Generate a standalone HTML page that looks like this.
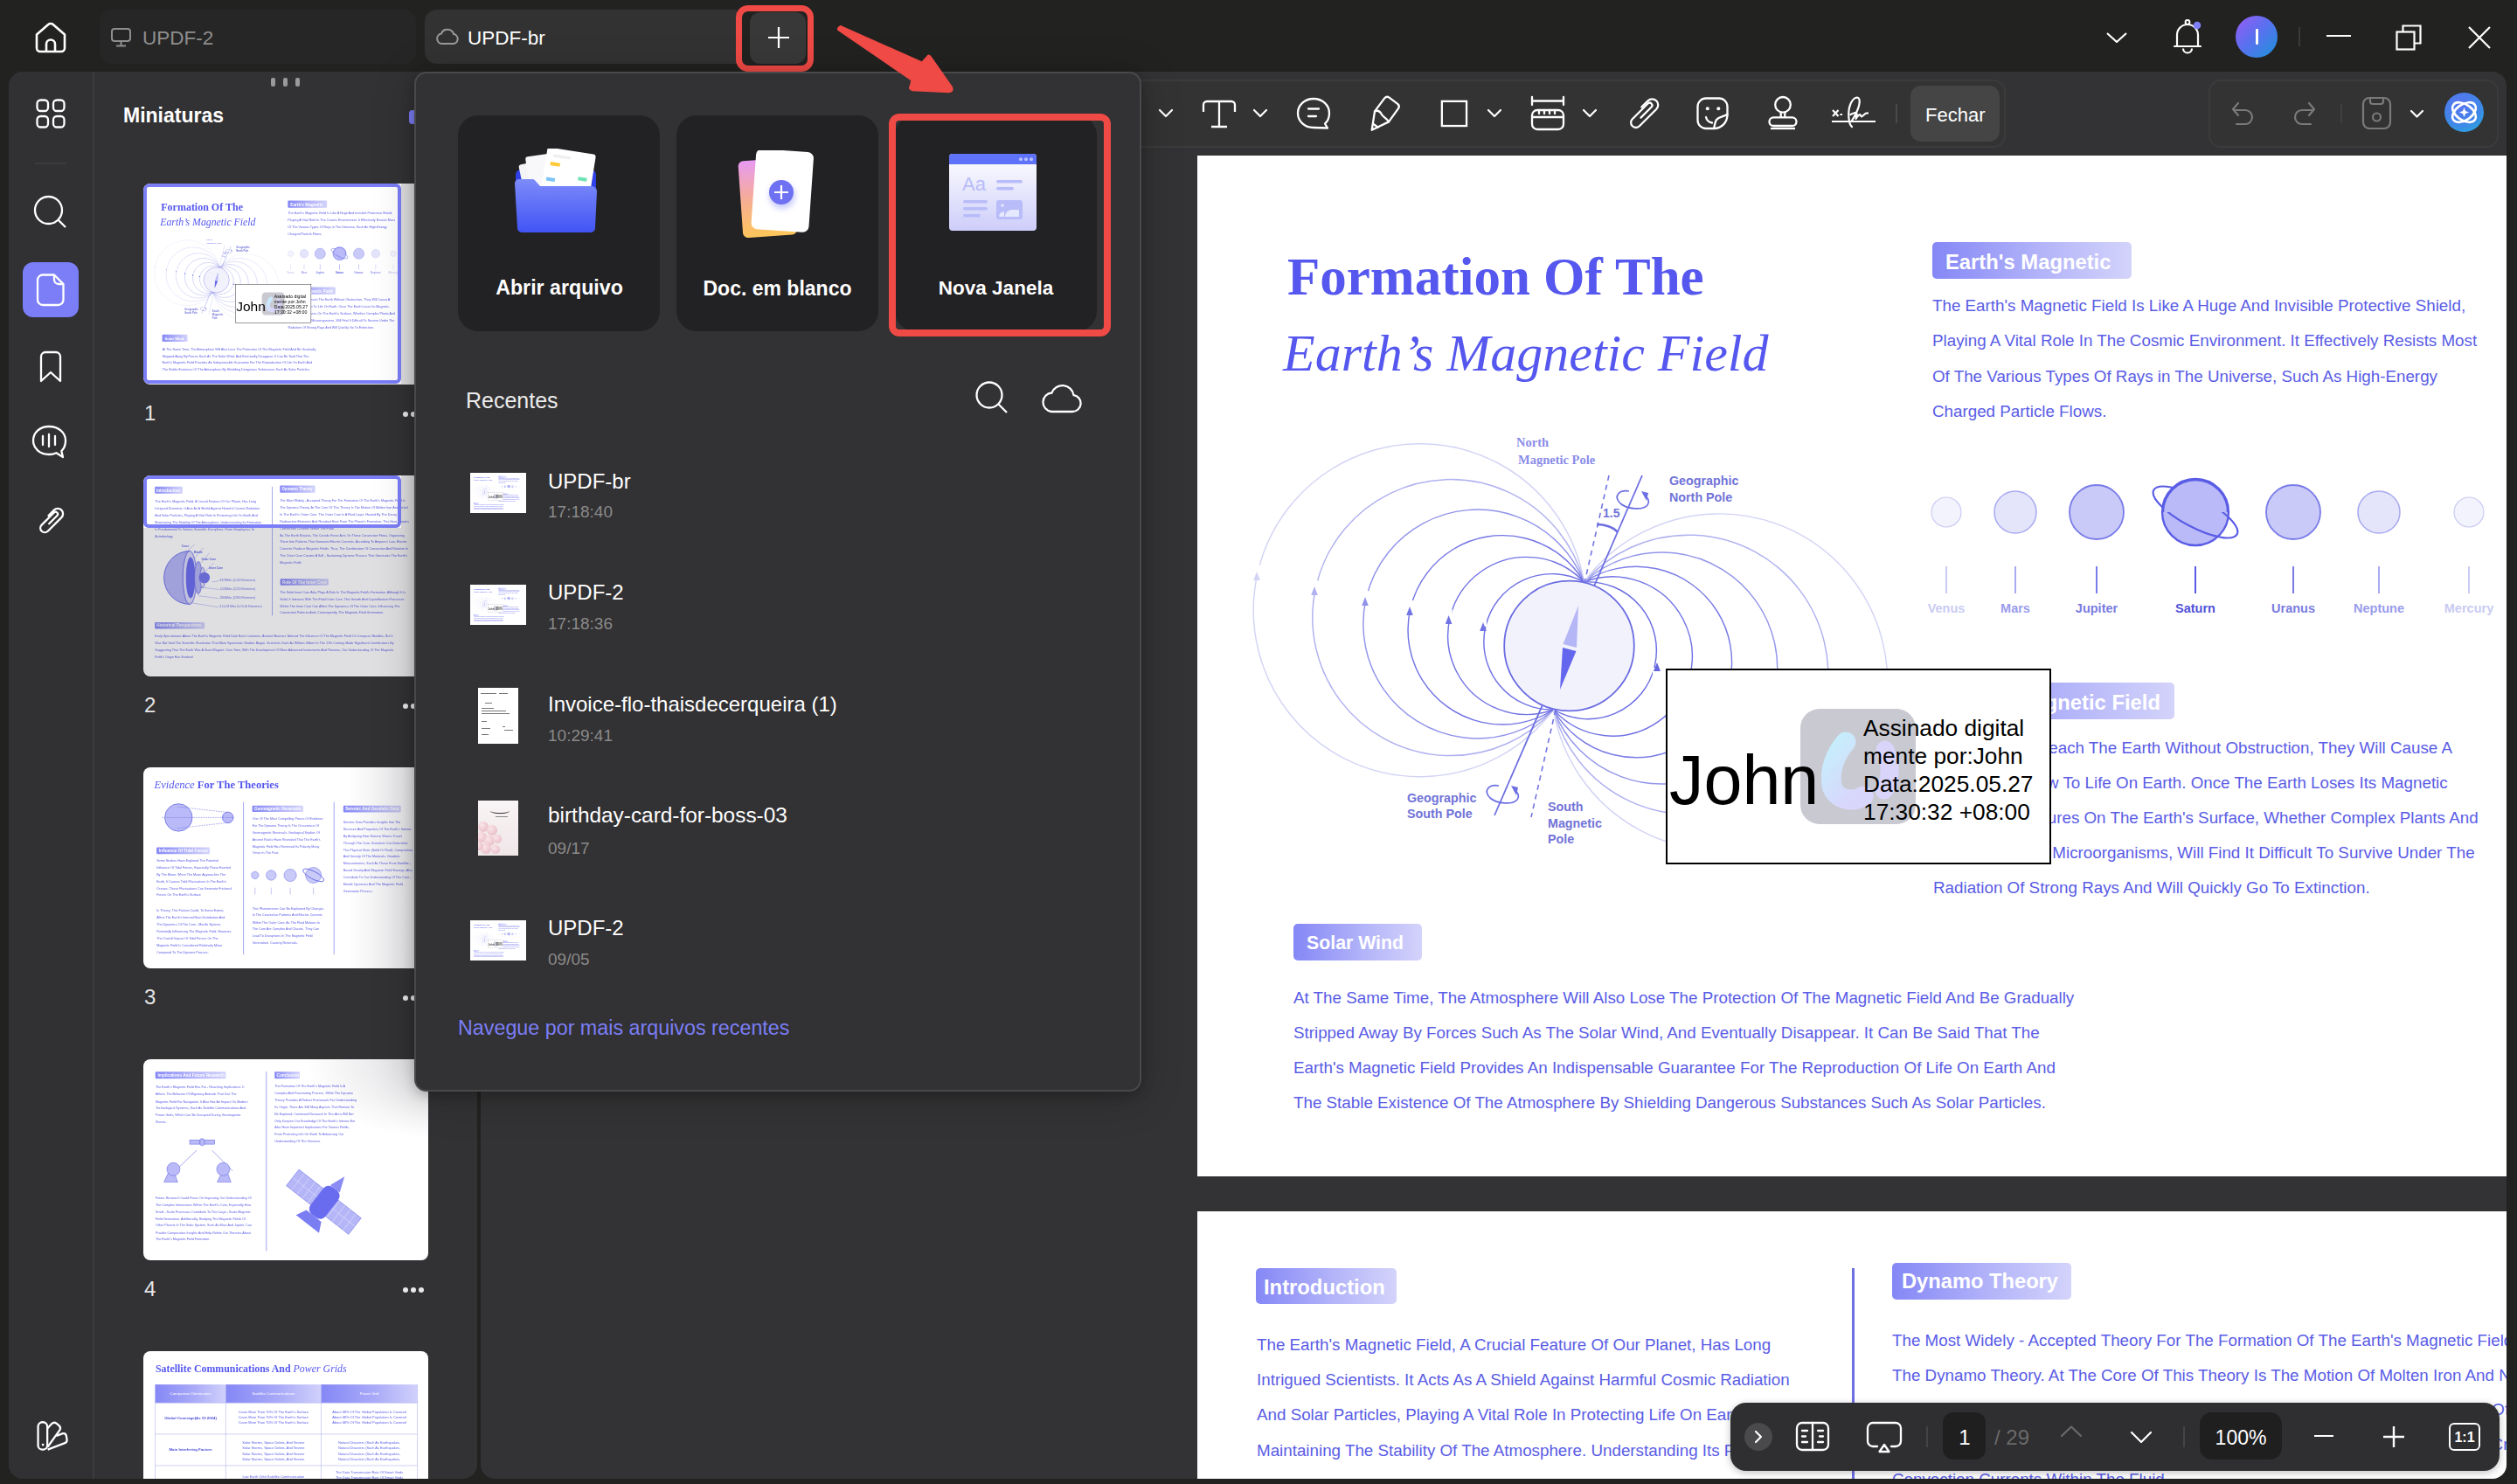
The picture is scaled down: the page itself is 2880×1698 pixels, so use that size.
<!DOCTYPE html>
<html><head><meta charset="utf-8">
<style>
*{margin:0;padding:0;box-sizing:border-box}
html,body{width:2880px;height:1698px;overflow:hidden;background:#222221;font-family:"Liberation Sans",sans-serif}
.t{position:absolute;white-space:nowrap;line-height:1}
.r{position:absolute}
.clip{position:absolute;overflow:hidden}
</style></head><body>
<svg class="r" style="left:38px;top:22px;" width="40" height="40" viewBox="0 0 40 40" fill="none"><path d="M4 17.5 L17 6.2 a4.5 4.5 0 0 1 6 0 L36 17.5 V33 a4 4 0 0 1 -4 4 H8 a4 4 0 0 1 -4 -4 Z" stroke="#fff" stroke-width="2.6" stroke-linejoin="round"/><path d="M15 37 V28.5 a5 5 0 0 1 10 0 V37" stroke="#fff" stroke-width="2.6"/></svg>
<div class="r" style="left:114px;top:11px;width:362px;height:62px;background:#262626;border-radius:14px;"></div>
<svg class="r" style="left:126px;top:31px;" width="26" height="24" viewBox="0 0 26 24" fill="none"><rect x="2" y="2" width="21" height="14" rx="3" stroke="#8e8e8e" stroke-width="2"/><path d="M12.5 16 V21 M7 21.5 H18" stroke="#8e8e8e" stroke-width="2"/></svg>
<div class="t" style="left:163px;top:32.95px;font-size:22.5px;color:#8e8e8e;">UPDF-2</div>
<div class="r" style="left:486px;top:11px;width:420px;height:62px;background:#323232;border-radius:14px;"></div>
<svg class="r" style="left:498px;top:30px;" width="28" height="24" viewBox="0 0 28 24" fill="none"><path d="M7.5 20 H20 a5.5 5.5 0 0 0 1.2 -10.9 A7.5 7.5 0 0 0 7 8.5 A5.8 5.8 0 0 0 7.5 20 Z" stroke="#9a9a9a" stroke-width="2" stroke-linejoin="round"/></svg>
<div class="t" style="left:535px;top:32.95px;font-size:22.5px;color:#ffffff;">UPDF-br</div>
<div class="r" style="left:843px;top:11px;width:88px;height:62px;background:#222221;border-radius:0px;"></div>
<div class="r" style="left:858px;top:14px;width:64px;height:59px;background:#383838;border-radius:12px;"></div>
<svg class="r" style="left:877px;top:29px;" width="28" height="28" viewBox="0 0 28 28" fill="none"><path d="M14 2 V26 M2 14 H26" stroke="#fff" stroke-width="2.2"/></svg>
<div class="r" style="left:842px;top:6px;width:89px;height:76px;border:7.5px solid #ef4a45;border-radius:14px"></div>
<svg class="r" style="left:2408px;top:34px;" width="28" height="18" viewBox="0 0 28 18" fill="none"><path d="M3 4 L14 14 L25 4" stroke="#fff" stroke-width="2.2" stroke-linejoin="round"/></svg>
<svg class="r" style="left:2484px;top:20px;" width="40" height="42" viewBox="0 0 40 42" fill="none"><path d="M7 33 V20 a12 12 0 0 1 24 0 V33 M4 33 H34" stroke="#fff" stroke-width="2.2" stroke-linecap="round"/><path d="M14 35.5 a5 5 0 0 0 10 0" stroke="#fff" stroke-width="2.2"/><circle cx="19" cy="5.5" r="2.4" stroke="#fff" stroke-width="2"/><circle cx="30" cy="9" r="4.3" fill="#7e80f7"/></svg>
<div class="r" style="left:2558px;top:18px;width:48px;height:48px;border-radius:50%;background:linear-gradient(135deg,#9b5cf6 0%,#5c6ff0 45%,#1b93d9 100%)"></div>
<div class="r" style="left:2581px;top:33px;width:2.6px;height:18px;background:#fff;border-radius:1px;"></div>
<div class="r" style="left:2630px;top:31px;width:2px;height:22px;background:#3a3a3a;border-radius:0px;"></div>
<div class="r" style="left:2662px;top:40px;width:28px;height:2.4px;background:#fff;border-radius:0px;"></div>
<svg class="r" style="left:2740px;top:27px;" width="32" height="32" viewBox="0 0 32 32" fill="none"><rect x="2.5" y="9.5" width="20" height="20" stroke="#fff" stroke-width="2.2"/><path d="M9.5 9.5 V2.5 H29.5 V22.5 H22.5" stroke="#fff" stroke-width="2.2"/></svg>
<svg class="r" style="left:2823px;top:29px;" width="28" height="28" viewBox="0 0 28 28" fill="none"><path d="M2 2 L26 26 M26 2 L2 26" stroke="#fff" stroke-width="2.2"/></svg>
<div class="r" style="left:10px;top:82px;width:536px;height:1610px;background:#323133;border-radius:16px;"></div>
<div class="r" style="left:10px;top:82px;width:97px;height:1610px;background:#313032;border-radius:16px 0 0 16px"></div>
<div class="r" style="left:106px;top:82px;width:2px;height:1610px;background:#3c3b3d;border-radius:0px;"></div>
<svg class="r" style="left:40px;top:112px;" width="36" height="36" viewBox="0 0 36 36" fill="none"><rect x="2.5" y="2.5" width="12.5" height="12.5" rx="4" stroke="#fff" stroke-width="2.3"/><rect x="21" y="2.5" width="12.5" height="12.5" rx="4" stroke="#fff" stroke-width="2.3"/><rect x="2.5" y="21" width="12.5" height="12.5" rx="4" stroke="#fff" stroke-width="2.3"/><rect x="21" y="21" width="12.5" height="12.5" rx="4" stroke="#fff" stroke-width="2.3"/></svg>
<div class="r" style="left:40px;top:186px;width:36px;height:1.5px;background:#3c3c3c;border-radius:0px;"></div>
<svg class="r" style="left:37px;top:222px;" width="42" height="42" viewBox="0 0 42 42" fill="none"><circle cx="18.5" cy="18.5" r="15.5" stroke="#fff" stroke-width="2.3"/><path d="M29.5 29.5 L38 38" stroke="#fff" stroke-width="2.3"/></svg>
<div class="r" style="left:26px;top:300px;width:64px;height:63px;background:#7b7ef7;border-radius:12px;"></div>
<svg class="r" style="left:40px;top:312px;" width="36" height="40" viewBox="0 0 36 40" fill="none"><path d="M9 2.5 H22 L32.5 13 V31 a6 6 0 0 1 -6 6 H9 a6 6 0 0 1 -6 -6 V8.5 a6 6 0 0 1 6 -6 Z" stroke="#fff" stroke-width="2.3" stroke-linejoin="round"/><path d="M22 2.5 V8 a5 5 0 0 0 5 5 H32.5" stroke="#fff" stroke-width="2.3"/></svg>
<svg class="r" style="left:42px;top:400px;" width="32" height="40" viewBox="0 0 32 40" fill="none"><path d="M5 36 V8 a5 5 0 0 1 5 -5 H22 a5 5 0 0 1 5 5 V36 L16 26 Z" stroke="#fff" stroke-width="2.3" stroke-linejoin="round"/></svg>
<svg class="r" style="left:35px;top:485px;" width="44" height="42" viewBox="0 0 44 42" fill="none"><path d="M21 3 C10.5 3 3 10 3 19 C3 28 10.5 35 21 35 C24 35 27 34.3 29.5 33.2 L37 38 L35.3 31 C38.7 28 40 24 40 19 C40 10 32 3 21 3 Z" stroke="#fff" stroke-width="2.3" stroke-linejoin="round"/><path d="M14 14 V24 M21 12 V26 M28 14 V24" stroke="#fff" stroke-width="2.3" stroke-linecap="round"/></svg>
<svg class="r" style="left:39px;top:575px;" width="40" height="40" viewBox="0 0 40 40" fill="none"><g transform="translate(20 20) rotate(45)"><path d="M-6,-1 V-10 A6,6 0 0 1 6,-10 V12 A5,5 0 0 1 -4,12 V-8 A2.5,2.5 0 0 1 1,-8 V5" stroke="#fff" stroke-width="2.3" stroke-linecap="round"/></g></svg>
<svg class="r" style="left:40px;top:1624px;" width="40" height="40" viewBox="0 0 40 40" fill="none"><rect x="3.55" y="3.25" width="10.6" height="31.4" rx="5" stroke="#fff" stroke-width="2.3"/><circle cx="9.1" cy="29.1" r="1.4" fill="#fff"/><path d="M14.15 10.5 L19.2 5 Q21.8 2.6 24.6 4.6 L27.8 7.4 Q30 9.8 28.3 12.3 L14.6 31.5" stroke="#fff" stroke-width="2.3" stroke-linejoin="round"/><path d="M24.6 18.8 L32 16.2 Q35 15.6 35.8 18.6 L36.6 23.4 Q36.9 26.2 34.2 27.2 L14.6 34.6" stroke="#fff" stroke-width="2.3" stroke-linejoin="round"/></svg>
<div class="r" style="left:310px;top:89px;width:4.5px;height:10px;background:#9a9a9a;border-radius:2px;"></div>
<div class="r" style="left:324px;top:89px;width:4.5px;height:10px;background:#9a9a9a;border-radius:2px;"></div>
<div class="r" style="left:338px;top:89px;width:4.5px;height:10px;background:#9a9a9a;border-radius:2px;"></div>
<div class="t" style="left:141px;top:120.53px;font-size:23px;color:#fff;font-weight:700;">Miniaturas</div>
<div class="r" style="left:468px;top:126px;width:10px;height:16px;background:#7b7ef7;border-radius:4px;"></div>
<div class="t" style="left:165px;top:460.68px;font-size:24px;color:#e6e6e6;">1</div>
<div class="r" style="left:461px;top:470.5px;width:6px;height:6px;background:#e8e8e8;border-radius:3px;"></div>
<div class="r" style="left:470px;top:470.5px;width:6px;height:6px;background:#e8e8e8;border-radius:3px;"></div>
<div class="r" style="left:479px;top:470.5px;width:6px;height:6px;background:#e8e8e8;border-radius:3px;"></div>
<div class="t" style="left:165px;top:794.68px;font-size:24px;color:#e6e6e6;">2</div>
<div class="r" style="left:461px;top:804.5px;width:6px;height:6px;background:#e8e8e8;border-radius:3px;"></div>
<div class="r" style="left:470px;top:804.5px;width:6px;height:6px;background:#e8e8e8;border-radius:3px;"></div>
<div class="r" style="left:479px;top:804.5px;width:6px;height:6px;background:#e8e8e8;border-radius:3px;"></div>
<div class="t" style="left:165px;top:1128.68px;font-size:24px;color:#e6e6e6;">3</div>
<div class="r" style="left:461px;top:1138.5px;width:6px;height:6px;background:#e8e8e8;border-radius:3px;"></div>
<div class="r" style="left:470px;top:1138.5px;width:6px;height:6px;background:#e8e8e8;border-radius:3px;"></div>
<div class="r" style="left:479px;top:1138.5px;width:6px;height:6px;background:#e8e8e8;border-radius:3px;"></div>
<div class="t" style="left:165px;top:1462.68px;font-size:24px;color:#e6e6e6;">4</div>
<div class="r" style="left:461px;top:1472.5px;width:6px;height:6px;background:#e8e8e8;border-radius:3px;"></div>
<div class="r" style="left:470px;top:1472.5px;width:6px;height:6px;background:#e8e8e8;border-radius:3px;"></div>
<div class="r" style="left:479px;top:1472.5px;width:6px;height:6px;background:#e8e8e8;border-radius:3px;"></div>
<div class="clip" style="left:550px;top:82px;width:2318px;height:1610px;background:#333234;border-radius:16px">
<div class="r" style="left:10px;top:9px;width:1735px;height:78px;background:#333334;border:2px solid #3b3b3c;border-radius:14px"></div>
<div class="r" style="left:1977px;top:9px;width:332px;height:78px;background:#333334;border:2px solid #3b3b3c;border-radius:14px"></div>
<div class="clip" style="left:820px;top:96px;width:1658px;height:1168px;background:#fff"><div class="t" style="left:103px;top:107.91px;font-size:61px;color:#5557ee;font-weight:700;font-family:'Liberation Serif', serif;">Formation Of The</div><div class="t" style="left:98px;top:195.75px;font-size:60px;color:#5557ee;font-family:'Liberation Serif', serif;font-style:italic;">Earth’s Magnetic Field</div><svg class="r" style="left:0;top:0" width="1000" height="900" fill="none"><path d="M442.5,488 A190.5,190.5 0 1 0 407.5,634" stroke="#d3d4f5" stroke-width="1.45"/><rect x="64" y="469" width="8" height="12" fill="#fff"/><path d="M64.2,486 L68,476 L71.8,486 Z" fill="#d3d4f5"/><path d="M442.5,488 A158.0,158.0 0 1 0 407.5,634" stroke="#b0b1f0" stroke-width="1.45"/><rect x="130" y="486" width="8" height="12" fill="#fff"/><path d="M130.2,503 L134,493 L137.8,503 Z" fill="#b0b1f0"/><path d="M442.5,488 A130.9,130.9 0 1 0 407.5,634" stroke="#9193eb" stroke-width="1.45"/><rect x="188" y="498" width="8" height="12" fill="#fff"/><path d="M188.2,515 L192,505 L195.8,515 Z" fill="#9193eb"/><path d="M442.5,488 A108.2,108.2 0 1 0 407.5,634" stroke="#7375e4" stroke-width="1.45"/><rect x="239" y="509" width="8" height="12" fill="#fff"/><path d="M239.2,526 L243,516 L246.8,526 Z" fill="#7375e4"/><path d="M442.5,488 A90.0,90.0 0 1 0 407.5,634" stroke="#7173e4" stroke-width="1.45"/><rect x="283.6" y="519" width="8" height="12" fill="#fff"/><path d="M283.8,536 L287.6,526 L291.40000000000003,536 Z" fill="#7173e4"/><path d="M442.5,488 A77.7,77.7 0 1 0 407.5,634" stroke="#7173e4" stroke-width="1.45"/><rect x="323" y="527" width="8" height="12" fill="#fff"/><path d="M323.2,544 L327,534 L330.8,544 Z" fill="#7173e4"/><path d="M442.5,488 A78.4,78.4 0 1 1 407.5,634" stroke="#6d6fe2" stroke-width="1.45"/><path d="M442.5,488 A91.1,91.1 0 1 1 407.5,634" stroke="#7173e4" stroke-width="1.45"/><path d="M442.5,488 A109.3,109.3 0 1 1 407.5,634" stroke="#7a7ce6" stroke-width="1.45"/><path d="M442.5,488 A132.5,132.5 0 1 1 407.5,634" stroke="#9395ea" stroke-width="1.45"/><path d="M442.5,488 A159.7,159.7 0 1 1 407.5,634" stroke="#b0b1f0" stroke-width="1.45"/><path d="M442.5,488 A192.4,192.4 0 1 1 407.5,634" stroke="#d3d4f5" stroke-width="1.45"/><rect x="521" y="586" width="10" height="12" fill="#fff"/><path d="M522,590 L526,580 L530,590 Z" fill="#6466e0"/><path d="M509,366 L340,755" stroke="#6d6fe2" stroke-width="1.8"/><path d="M471,366 L382,757" stroke="#7375e2" stroke-width="1.6" stroke-dasharray="6 5"/><path d="M494,384 C 482,382 476,390 484,398 C 492,405 510,406 515,400 C 518,396 516,392 512,389" stroke="#6d6fe2" stroke-width="1.7"/><path d="M508,384 L516,386 L514,395 Z" fill="#6d6fe2"/><path d="M457,422 C 466,422 476,425 481,431" stroke="#6d6fe2" stroke-width="2.6"/><path d="M345,721 C 333,719 327,727 335,735 C 343,742 361,743 366,737 C 369,733 367,729 363,726" stroke="#6d6fe2" stroke-width="1.7"/><path d="M359,721 L367,723 L365,732 Z" fill="#6d6fe2"/><circle cx="425.5" cy="561" r="74.3" fill="#f2f2fc" stroke="#6a6ce2" stroke-width="1.8"/><path d="M436,515 L418.5,559 L434,563 Z" fill="#b5b6f6"/><path d="M418,563 L433.5,567 L415,611 Z" fill="#6466ee"/></svg><div class="t" style="left:365px;top:320.86px;font-size:14.5px;color:#8a8ce8;font-weight:700;font-family:'Liberation Serif', serif;">North</div><div class="t" style="left:367px;top:340.86px;font-size:14.5px;color:#8a8ce8;font-weight:700;font-family:'Liberation Serif', serif;">Magnetic Pole</div><div class="t" style="left:540px;top:364.90px;font-size:14.3px;color:#7173d8;font-weight:700;">Geographic</div><div class="t" style="left:540px;top:383.90px;font-size:14.3px;color:#7173d8;font-weight:700;">North Pole</div><div class="t" style="left:464px;top:402.15px;font-size:14px;color:#7173d8;font-weight:700;">1.5</div><div class="t" style="left:240px;top:727.90px;font-size:14.3px;color:#7173d8;font-weight:700;">Geographic</div><div class="t" style="left:240px;top:745.90px;font-size:14.3px;color:#7173d8;font-weight:700;">South Pole</div><div class="t" style="left:401px;top:737.90px;font-size:14.3px;color:#7173d8;font-weight:700;">South</div><div class="t" style="left:401px;top:756.90px;font-size:14.3px;color:#7173d8;font-weight:700;">Magnetic</div><div class="t" style="left:401px;top:774.90px;font-size:14.3px;color:#7173d8;font-weight:700;">Pole</div><div class="r" style="left:841px;top:99px;width:228px;height:42px;border-radius:5px;background:linear-gradient(90deg,#8587f6 0%,#b3b4f9 55%,#d3d3fb 100%)"></div><div class="t" style="left:856px;top:109.85px;font-size:23.8px;color:#fff;font-weight:700;">Earth&#x27;s Magnetic</div><div class="t" style="left:841px;top:163.09px;font-size:18.8px;color:#5a5ce6;">The Earth&#x27;s Magnetic Field Is Like A Huge And Invisible Protective Shield,</div><div class="t" style="left:841px;top:203.39px;font-size:18.8px;color:#5a5ce6;">Playing A Vital Role In The Cosmic Environment. It Effectively Resists Most</div><div class="t" style="left:841px;top:243.69px;font-size:18.8px;color:#5a5ce6;">Of The Various Types Of Rays in The Universe, Such As High-Energy</div><div class="t" style="left:841px;top:283.99px;font-size:18.8px;color:#5a5ce6;">Charged Particle Flows.</div><svg class="r" style="left:0;top:0" width="1660" height="560" fill="none"><circle cx="857" cy="408" r="17" fill="#f3f3fd" stroke="#c9cbf3" stroke-width="1.1700000000000002"/><path d="M857,470 V501" stroke="#c9cbf3" stroke-width="2"/><circle cx="936" cy="408" r="24" fill="#e4e4fb" stroke="#a9abf0" stroke-width="1.56"/><path d="M936,470 V501" stroke="#a9abf0" stroke-width="2"/><circle cx="1029" cy="408" r="31" fill="#c9caf8" stroke="#7a7ce8" stroke-width="1.8199999999999998"/><path d="M1029,470 V501" stroke="#7a7ce8" stroke-width="2"/><circle cx="1142" cy="408" r="38" fill="#b9baf7" stroke="#5a5ce6" stroke-width="2.3400000000000003"/><path d="M1142,470 V501" stroke="#5a5ce6" stroke-width="2"/><circle cx="1254" cy="408" r="31" fill="#c9caf8" stroke="#7a7ce8" stroke-width="1.8199999999999998"/><path d="M1254,470 V501" stroke="#7a7ce8" stroke-width="2"/><circle cx="1352" cy="408" r="24" fill="#e4e4fb" stroke="#a9abf0" stroke-width="1.56"/><path d="M1352,470 V501" stroke="#a9abf0" stroke-width="2"/><circle cx="1455" cy="408" r="17" fill="#f3f3fd" stroke="#c9cbf3" stroke-width="1.1700000000000002"/><path d="M1455,470 V501" stroke="#c9cbf3" stroke-width="2"/><ellipse cx="1142" cy="408" rx="54" ry="17" transform="rotate(28 1142 408)" stroke="#5a5ce6" stroke-width="2.2"/><circle cx="1142" cy="408" r="37" fill="#b9baf7" fill-opacity="0.0"/><path d="M1105,408 A37,37 0 0 1 1179,408" fill="#b9baf7" stroke="#5a5ce6" stroke-width="2.3" /></svg><div class="t" style="left:857px;top:510.73px;font-size:14.5px;color:#c9cbf3;font-weight:700;transform:translateX(-50%);">Venus</div><div class="t" style="left:936px;top:510.73px;font-size:14.5px;color:#9a9cec;font-weight:700;transform:translateX(-50%);">Mars</div><div class="t" style="left:1029px;top:510.73px;font-size:14.5px;color:#7a7ce0;font-weight:700;transform:translateX(-50%);">Jupiter</div><div class="t" style="left:1142px;top:510.73px;font-size:14.5px;color:#5052d8;font-weight:700;transform:translateX(-50%);">Saturn</div><div class="t" style="left:1254px;top:510.73px;font-size:14.5px;color:#7a7ce0;font-weight:700;transform:translateX(-50%);">Uranus</div><div class="t" style="left:1352px;top:510.73px;font-size:14.5px;color:#9a9cec;font-weight:700;transform:translateX(-50%);">Neptune</div><div class="t" style="left:1455px;top:510.73px;font-size:14.5px;color:#c9cbf3;font-weight:700;transform:translateX(-50%);">Mercury</div><div class="r" style="left:841px;top:603px;width:277px;height:42px;border-radius:5px;background:linear-gradient(90deg,#8587f6 0%,#b3b4f9 55%,#d3d3fb 100%)"></div><div class="t" style="left:1102px;top:613.85px;font-size:23.8px;color:#fff;font-weight:700;transform:translateX(-100%);">The Magnetic Field</div><div class="t" style="left:1436px;top:669.09px;font-size:18.8px;color:#5a5ce6;transform:translateX(-100%);">If These Rays Reach The Earth Without Obstruction, They Will Cause A</div><div class="t" style="left:1430.7px;top:709.09px;font-size:18.8px;color:#5a5ce6;transform:translateX(-100%);">Devastating Blow To Life On Earth. Once The Earth Loses Its Magnetic</div><div class="t" style="left:1465.6px;top:749.09px;font-size:18.8px;color:#5a5ce6;transform:translateX(-100%);">Field, All Creatures On The Earth&#x27;s Surface, Whether Complex Plants And</div><div class="t" style="left:1461.6px;top:789.09px;font-size:18.8px;color:#5a5ce6;transform:translateX(-100%);">Animals And Tiny Microorganisms, Will Find It Difficult To Survive Under The</div><div class="t" style="left:842px;top:829.09px;font-size:18.8px;color:#5a5ce6;">Radiation Of Strong Rays And Will Quickly Go To Extinction.</div><div class="r" style="left:536px;top:587px;width:441px;height:224px;background:#fff;border:2.8px solid #000"></div><div class="r" style="left:690px;top:633px;width:132px;height:132px;background:#c9c9d1;border-radius:22px;"></div><svg class="r" style="left:690px;top:633px" width="132" height="132" fill="none"><defs><linearGradient id="sg1" x1="0" y1="0" x2="0.6" y2="1"><stop offset="0" stop-color="#c6eefc"/><stop offset="1" stop-color="#d8d6fb"/></linearGradient></defs><path d="M52,38 C40,52 33,70 36,88 C40,104 60,108 72,100" stroke="url(#sg1)" stroke-width="23" stroke-linecap="round"/><path d="M97,47 C104,62 104,80 96,93" stroke="#d9d5fa" stroke-width="21" stroke-linecap="round"/></svg><div class="t" style="left:540px;top:675.13px;font-size:79px;color:#000;">John</div><div class="t" style="left:762px;top:641.74px;font-size:26.3px;color:#000;">Assinado digital</div><div class="t" style="left:762px;top:673.74px;font-size:26.3px;color:#000;">mente por:John</div><div class="t" style="left:762px;top:705.74px;font-size:26.3px;color:#000;">Data:2025.05.27</div><div class="t" style="left:762px;top:737.74px;font-size:26.3px;color:#000;">17:30:32 +08:00</div><div class="r" style="left:110px;top:879px;width:147px;height:42px;border-radius:5px;background:linear-gradient(90deg,#8587f6 0%,#b3b4f9 55%,#d3d3fb 100%)"></div><div class="t" style="left:125px;top:890.97px;font-size:21.3px;color:#fff;font-weight:700;">Solar Wind</div><div class="t" style="left:110px;top:955.09px;font-size:18.8px;color:#5a5ce6;">At The Same Time, The Atmosphere Will Also Lose The Protection Of The Magnetic Field And Be Gradually</div><div class="t" style="left:110px;top:995.09px;font-size:18.8px;color:#5a5ce6;">Stripped Away By Forces Such As The Solar Wind, And Eventually Disappear. It Can Be Said That The</div><div class="t" style="left:110px;top:1035.09px;font-size:18.8px;color:#5a5ce6;">Earth&#x27;s Magnetic Field Provides An Indispensable Guarantee For The Reproduction Of Life On Earth And</div><div class="t" style="left:110px;top:1075.09px;font-size:18.8px;color:#5a5ce6;">The Stable Existence Of The Atmosphere By Shielding Dangerous Substances Such As Solar Particles.</div></div>
<div class="clip" style="left:820px;top:1304px;width:1658px;height:1168px;background:#fff"><div class="r" style="left:67px;top:65px;width:161px;height:41px;border-radius:5px;background:linear-gradient(90deg,#8587f6 0%,#b3b4f9 55%,#d3d3fb 100%)"></div><div class="t" style="left:76px;top:74.85px;font-size:23.8px;color:#fff;font-weight:700;">Introduction</div><div class="r" style="left:749px;top:65px;width:2.5px;height:750px;background:#6d6fe2;border-radius:0px;"></div><div class="r" style="left:795px;top:59px;width:205px;height:42px;border-radius:5px;background:linear-gradient(90deg,#8587f6 0%,#b3b4f9 55%,#d3d3fb 100%)"></div><div class="t" style="left:806px;top:68.94px;font-size:23.7px;color:#fff;font-weight:700;">Dynamo Theory</div><div class="t" style="left:68px;top:144.09px;font-size:18.8px;color:#5a5ce6;">The Earth&#x27;s Magnetic Field, A Crucial Feature Of Our Planet, Has Long</div><div class="t" style="left:68px;top:184.29px;font-size:18.8px;color:#5a5ce6;">Intrigued Scientists. It Acts As A Shield Against Harmful Cosmic Radiation</div><div class="t" style="left:68px;top:224.49px;font-size:18.8px;color:#5a5ce6;">And Solar Particles, Playing A Vital Role In Protecting Life On Earth And</div><div class="t" style="left:68px;top:264.69px;font-size:18.8px;color:#5a5ce6;">Maintaining The Stability Of The Atmosphere. Understanding Its Formation</div><div class="t" style="left:68px;top:304.89px;font-size:18.8px;color:#5a5ce6;">Is Fundamental To Various Scientific Disciplines, From Geophysics To</div><div class="t" style="left:68px;top:345.09px;font-size:18.8px;color:#5a5ce6;">Astrobiology.</div><div class="t" style="left:795px;top:139.09px;font-size:18.8px;color:#5a5ce6;">The Most Widely - Accepted Theory For The Formation Of The Earth&#x27;s Magnetic Field Is</div><div class="t" style="left:795px;top:178.79px;font-size:18.8px;color:#5a5ce6;">The Dynamo Theory. At The Core Of This Theory Is The Motion Of Molten Iron And Nickel</div><div class="t" style="left:795px;top:218.49px;font-size:18.8px;color:#5a5ce6;">In The Earth&#x27;s Outer Core. The Outer Core Is A Fluid Layer, Heated By The Decay Of</div><div class="t" style="left:795px;top:258.19px;font-size:18.8px;color:#5a5ce6;">Radioactive Elements And Residual Heat From The Planet&#x27;s Formation. This Heat Creates</div><div class="t" style="left:795px;top:297.89px;font-size:18.8px;color:#5a5ce6;">Convection Currents Within The Fluid.</div><div class="t" style="left:795px;top:339.09px;font-size:18.8px;color:#5a5ce6;">As The Earth Rotates, The Coriolis Force Acts On These Convection Flows, Organizing</div><div class="t" style="left:795px;top:378.79px;font-size:18.8px;color:#5a5ce6;">Them Into Patterns That Generate Electric Currents. According To Ampere&#x27;s Law, Electric</div><div class="t" style="left:795px;top:418.49px;font-size:18.8px;color:#5a5ce6;">Currents Produce Magnetic Fields. Thus, The Combination Of Convection And Rotation In</div><div class="t" style="left:795px;top:458.19px;font-size:18.8px;color:#5a5ce6;">The Outer Core Creates A Self - Sustaining Dynamo Process That Generates The Earth&#x27;s</div><div class="t" style="left:795px;top:497.89px;font-size:18.8px;color:#5a5ce6;">Magnetic Field.</div><div class="r" style="left:797px;top:601px;width:281px;height:39px;border-radius:5px;background:linear-gradient(90deg,#8587f6 0%,#b3b4f9 55%,#d3d3fb 100%)"></div><div class="t" style="left:808px;top:609.94px;font-size:23.7px;color:#fff;font-weight:700;">Role Of The Inner Core</div><div class="t" style="left:795px;top:671.09px;font-size:18.8px;color:#5a5ce6;">The Solid Inner Core Also Plays A Role In The Magnetic Field&#x27;s Formation. Although It Is</div><div class="t" style="left:795px;top:711.09px;font-size:18.8px;color:#5a5ce6;">Solid, It Interacts With The Fluid Outer Core. The Growth And Crystallization Processes</div><div class="t" style="left:795px;top:751.09px;font-size:18.8px;color:#5a5ce6;">Within The Inner Core Can Affect The Dynamics Of The Outer Core, Influencing The</div><div class="t" style="left:795px;top:791.09px;font-size:18.8px;color:#5a5ce6;">Convection Patterns And, Consequently, The Magnetic Field Generation.</div><div class="r" style="left:67px;top:855px;width:290px;height:38px;border-radius:5px;background:linear-gradient(90deg,#8587f6 0%,#b3b4f9 55%,#d3d3fb 100%)"></div><div class="t" style="left:78px;top:862.94px;font-size:23.7px;color:#fff;font-weight:700;">Historical Perspectives</div><div class="t" style="left:68px;top:925.09px;font-size:18.8px;color:#5a5ce6;">Early Speculations About The Earth&#x27;s Magnetic Field Date Back Centuries. Ancient Mariners Noticed The Influence Of The Magnetic Field On Compass Needles, But It</div><div class="t" style="left:68px;top:965.39px;font-size:18.8px;color:#5a5ce6;">Was Not Until The Scientific Revolution That More Systematic Studies Began. Scientists Such As William Gilbert In The 17th Century Made Significant Contributions By</div><div class="t" style="left:68px;top:1005.69px;font-size:18.8px;color:#5a5ce6;">Suggesting That The Earth Was A Giant Magnet. Over Time, With The Development Of More Advanced Instruments And Theories, Our Understanding Of The Magnetic</div><div class="t" style="left:68px;top:1045.99px;font-size:18.8px;color:#5a5ce6;">Field&#x27;s Origin Has Evolved.</div><svg class="r" style="left:0;top:0" width="800" height="900" fill="none"><path d="M270,440 A150,155 0 0 0 270,750 Z" fill="#b5b6f7" stroke="#5a5ce6" stroke-width="4"/><ellipse cx="270" cy="595" rx="40" ry="155" fill="#dcdcfa" stroke="#5a5ce6" stroke-width="4"/><ellipse cx="275" cy="595" rx="25" ry="118" fill="#6a6cf0" stroke="#5a5ce6" stroke-width="3"/><ellipse cx="320" cy="595" rx="22" ry="95" fill="#b5b6f7" stroke="#5a5ce6" stroke-width="3"/><ellipse cx="345" cy="595" rx="15" ry="60" fill="#dcdcfa" stroke="#5a5ce6" stroke-width="3"/><circle cx="355" cy="595" r="32" fill="#7577ee"/><path d="M240,455 L300,400 M300,480 L350,420 M335,510 L385,450 M360,560 L410,510 M400,620 L440,614 M330,650 L440,664 M320,700 L440,716 M270,740 L440,767" stroke="#7a7ce8" stroke-width="2"/></svg><div class="t" style="left:222px;top:406.46px;font-size:16px;color:#5a5ce6;font-weight:700;">Crust</div><div class="t" style="left:294px;top:438.46px;font-size:16px;color:#5a5ce6;font-weight:700;">Mantle</div><div class="t" style="left:338px;top:482.46px;font-size:16px;color:#5a5ce6;font-weight:700;">Outer Core</div><div class="t" style="left:383px;top:531.46px;font-size:16px;color:#5a5ce6;font-weight:700;">Inner Core</div><div class="t" style="left:445px;top:604.46px;font-size:16px;color:#6a6ce2;">6370Miles (5,150 Kilometers)</div><div class="t" style="left:445px;top:654.46px;font-size:16px;color:#6a6ce2;">1220Miles (2,220 Kilometers)</div><div class="t" style="left:445px;top:706.46px;font-size:16px;color:#6a6ce2;">1800Miles (2,900 Kilometers)</div><div class="t" style="left:445px;top:757.46px;font-size:16px;color:#6a6ce2;">3.10-23 Miles (5-70-40 Kilometers)</div></div>
</div>
<svg class="r" style="left:1325px;top:124px;" width="18" height="11.0" viewBox="0 0 18 11.0" fill="none"><path d="M2 2 L9.0 9.0 L16 2" stroke="#fff" stroke-width="2.2" stroke-linejoin="round" stroke-linecap="round"/></svg>
<svg class="r" style="left:1374px;top:112px;" width="42" height="36" viewBox="0 0 42 36" fill="none"><path d="M3 16 V8 a4 4 0 0 1 4 -4 H35 a4 4 0 0 1 4 4 V16 M21 4 V33 M12 33 H30" stroke="#fff" stroke-width="2.3"/></svg>
<svg class="r" style="left:1433px;top:124px;" width="18" height="11.0" viewBox="0 0 18 11.0" fill="none"><path d="M2 2 L9.0 9.0 L16 2" stroke="#fff" stroke-width="2.2" stroke-linejoin="round" stroke-linecap="round"/></svg>
<svg class="r" style="left:1482px;top:110px;" width="42" height="42" viewBox="0 0 42 42" fill="none"><path d="M21 3 C10.5 3 3 10.5 3 19.5 C3 28.5 10.5 36 21 36 L37 36.5 L34 31.5 C37.5 28.5 39 24.5 39 19.5 C39 10.5 31.5 3 21 3 Z" stroke="#fff" stroke-width="2.3" stroke-linecap="round" stroke-linejoin="round"/><path d="M15 14.5 H27 M15 23 H24" stroke="#fff" stroke-width="2.3" stroke-linecap="round" stroke-linejoin="round"/></svg>
<svg class="r" style="left:1566px;top:108px;" width="40" height="44" viewBox="0 0 40 44" fill="none"><path d="M3.7 40.7 L7 19.4 L18.2 4.4 Q20.5 1.6 23.6 3.6 L33.2 10.8 Q36 13.2 34 16.2 L23 31.4 Z" stroke="#fff" stroke-width="2.3" stroke-linecap="round" stroke-linejoin="round"/><path d="M7 19.4 C11 17.5 13.5 20 15 23 C17 26.5 20.5 27 23 31.4" stroke="#fff" stroke-width="2.3" stroke-linecap="round" stroke-linejoin="round"/><path d="M5.2 33.8 L10.8 37.6" stroke="#fff" stroke-width="2.3" stroke-linecap="round" stroke-linejoin="round"/></svg>
<svg class="r" style="left:1646px;top:112px;" width="36" height="36" viewBox="0 0 36 36" fill="none"><rect x="3.85" y="3.85" width="28.2" height="28.2" stroke="#fff" stroke-width="2.3"/></svg>
<svg class="r" style="left:1701px;top:124px;" width="18" height="11.0" viewBox="0 0 18 11.0" fill="none"><path d="M2 2 L9.0 9.0 L16 2" stroke="#fff" stroke-width="2.2" stroke-linejoin="round" stroke-linecap="round"/></svg>
<svg class="r" style="left:1750px;top:108px;" width="42" height="44" viewBox="0 0 42 44" fill="none"><path d="M3 3 V12 M39 3 V12 M3 7.5 H39" stroke="#fff" stroke-width="2.3" stroke-linecap="round" stroke-linejoin="round"/><rect x="3" y="18" width="36" height="22" rx="6" stroke="#fff" stroke-width="2.3" stroke-linecap="round" stroke-linejoin="round"/><path d="M3 26 H39 M11 18 V22 M17 18 V22 M23 18 V22 M29 18 V22" stroke="#fff" stroke-width="2.3" stroke-linecap="round" stroke-linejoin="round"/></svg>
<svg class="r" style="left:1810px;top:124px;" width="18" height="11.0" viewBox="0 0 18 11.0" fill="none"><path d="M2 2 L9.0 9.0 L16 2" stroke="#fff" stroke-width="2.2" stroke-linejoin="round" stroke-linecap="round"/></svg>
<svg class="r" style="left:1861px;top:109px;" width="40" height="40" viewBox="0 0 40 40" fill="none"><g transform="translate(20.5 20) rotate(45) scale(1.14)"><path d="M-6,-2 V-11 A6,6 0 0 1 6,-11 V13 A5,5 0 0 1 -4,13 V-9 A2.5,2.5 0 0 1 1,-9 V6" stroke="#fff" stroke-width="2.0" stroke-linecap="round"/></g></svg>
<svg class="r" style="left:1940px;top:110px;" width="40" height="40" viewBox="0 0 40 40" fill="none"><path d="M36.5 21 V12 a9.5 9.5 0 0 0 -9.5 -9.5 H12 a9.5 9.5 0 0 0 -9.5 9.5 V27.5 a9.5 9.5 0 0 0 9.5 9.5 H21 C30 37 36.5 30 36.5 21 Z" stroke="#fff" stroke-width="2.3" stroke-linecap="round" stroke-linejoin="round"/><path d="M36.5 21 C31 24 27 23 24 27 C22 30 22 34 21 37" stroke="#fff" stroke-width="2.3" stroke-linecap="round" stroke-linejoin="round"/><path d="M12 24 C13 28 15.5 30 19 30.5" stroke="#fff" stroke-width="2.3" stroke-linecap="round" stroke-linejoin="round"/><circle cx="13.8" cy="14.3" r="2" fill="#fff"/><circle cx="26.3" cy="14.3" r="2" fill="#fff"/></svg>
<svg class="r" style="left:2020px;top:108px;" width="40" height="42" viewBox="0 0 40 42" fill="none"><circle cx="20" cy="11.8" r="8.8" stroke="#fff" stroke-width="2.3"/><path d="M17.7 20.6 V26.4 M22.3 20.6 V26.4" stroke="#fff" stroke-width="2.3"/><rect x="4.5" y="26.4" width="31" height="9.6" rx="4.8" stroke="#fff" stroke-width="2.3"/><path d="M6 39 H34" stroke="#fff" stroke-width="2.3"/></svg>
<svg class="r" style="left:2093px;top:106px;" width="56" height="46" viewBox="0 0 56 46" fill="none"><path d="M4 20 L10.5 27 M10.5 20 L4 27" stroke="#fff" stroke-width="2.2"/><path d="M3 33 H53 M12.5 25 H15" stroke="#fff" stroke-width="2.2"/><path d="M26 39 C22 36 21 22 24 14 C27 6 33 3 34.5 8 C36 14 30 26 26 32 M24.5 25 C29 23 31 22 31.5 24 C32 26 31 28 30.5 30 C33 26 35 24 36 26 C36.5 28 37 28 39 26 C41 24 43 23 44 23.5" stroke="#fff" stroke-width="2.2" stroke-linecap="round" stroke-linejoin="round"/></svg>
<div class="r" style="left:2169px;top:119px;width:2px;height:22px;background:#4a4a4a;border-radius:0px;"></div>
<div class="r" style="left:2186px;top:98px;width:102px;height:64px;background:#454546;border-radius:12px;"></div>
<div class="t" style="left:2203px;top:121.38px;font-size:22px;color:#fff;">Fechar</div>
<svg class="r" style="left:2552px;top:114px;" width="28" height="30" viewBox="0 0 28 30" fill="none"><path d="M4 12 H17 a8 8 0 0 1 0 16 H7 M9 4 L3 11 L9 18" stroke="#7a7a7a" stroke-width="2.2" stroke-linecap="round" stroke-linejoin="round"/></svg>
<svg class="r" style="left:2623px;top:114px;" width="28" height="30" viewBox="0 0 28 30" fill="none"><path d="M24 12 H11 a8 8 0 0 0 0 16 H21 M19 4 L25 11 L19 18" stroke="#7a7a7a" stroke-width="2.2" stroke-linecap="round" stroke-linejoin="round"/></svg>
<div class="r" style="left:2678px;top:119px;width:2px;height:22px;background:#3f3f3f;border-radius:0px;"></div>
<svg class="r" style="left:2702px;top:110px;" width="36" height="40" viewBox="0 0 36 40" fill="none"><rect x="2" y="2" width="31" height="35" rx="7" stroke="#7a7a7a" stroke-width="2.2" stroke-linecap="round" stroke-linejoin="round"/><path d="M10 2 V6 a3 3 0 0 0 3 3 H22 a3 3 0 0 0 3 -3 V2" stroke="#7a7a7a" stroke-width="2.2" stroke-linecap="round" stroke-linejoin="round"/><circle cx="17.5" cy="24" r="4.5" stroke="#7a7a7a" stroke-width="2.2" stroke-linecap="round" stroke-linejoin="round"/></svg>
<svg class="r" style="left:2757px;top:125px;" width="17" height="10.5" viewBox="0 0 17 10.5" fill="none"><path d="M2 2 L8.5 8.5 L15 2" stroke="#fff" stroke-width="2.2" stroke-linejoin="round" stroke-linecap="round"/></svg>
<div class="r" style="left:2797px;top:106px;width:45px;height:45px;border-radius:50%;background:radial-gradient(circle at 40% 30%,#5a74f2 0%,#3f86e8 55%,#22b6d9 100%)"></div>
<svg class="r" style="left:2797px;top:106px;" width="45" height="45" viewBox="0 0 45 45" fill="none"><ellipse cx="22.5" cy="22.5" rx="15" ry="9" transform="rotate(-35 22.5 22.5)" stroke="#fff" stroke-width="2.6"/><ellipse cx="22.5" cy="22.5" rx="15" ry="9" transform="rotate(35 22.5 22.5)" stroke="#fff" stroke-width="2.6"/><path d="M22.5 17 L24 21 L28 22.5 L24 24 L22.5 28 L21 24 L17 22.5 L21 21 Z" fill="#fff"/></svg>
<div class="r" style="left:1980px;top:1605px;width:880px;height:78px;background:#2f2e30;border-radius:18px;box-shadow:0 2px 8px rgba(0,0,0,0.25)"></div>
<div class="r" style="left:1996px;top:1628px;width:32px;height:32px;border-radius:50%;background:#4a494b"></div>
<svg class="r" style="left:2004px;top:1635px;" width="16" height="18" viewBox="0 0 16 18" fill="none"><path d="M5 3 L11 9 L5 15" stroke="#fff" stroke-width="2.2" stroke-linecap="round" stroke-linejoin="round"/></svg>
<svg class="r" style="left:2054px;top:1626px;" width="42" height="36" viewBox="0 0 42 36" fill="none"><rect x="2" y="2" width="36" height="31" rx="6" stroke="#fff" stroke-width="2.3" stroke-linecap="round" stroke-linejoin="round"/><path d="M20 2 V33 M8 11 H14 M8 17.5 H12 M8 24 H14 M26 11 H32 M28 17.5 H32 M26 24 H32" stroke="#fff" stroke-width="2.3" stroke-linecap="round" stroke-linejoin="round"/></svg>
<svg class="r" style="left:2134px;top:1626px;" width="44" height="38" viewBox="0 0 44 38" fill="none"><path d="M14 29 H9 a6 6 0 0 1 -6 -6 V8 a6 6 0 0 1 6 -6 H35 a6 6 0 0 1 6 6 V23 a6 6 0 0 1 -6 6 H30" stroke="#fff" stroke-width="2.3" stroke-linecap="round" stroke-linejoin="round"/><path d="M22 27 L27.5 35 H16.5 Z" stroke="#fff" stroke-width="2.3" stroke-linecap="round" stroke-linejoin="round"/></svg>
<div class="r" style="left:2204px;top:1632px;width:2px;height:24px;background:#444;border-radius:0px;"></div>
<div class="r" style="left:2223px;top:1616px;width:49px;height:54px;background:#1f1f20;border-radius:12px;"></div>
<div class="t" style="left:2248px;top:1632.68px;font-size:24px;color:#fff;transform:translateX(-50%);">1</div>
<div class="t" style="left:2282px;top:1632.68px;font-size:24px;color:#6a6a6a;">/ 29</div>
<svg class="r" style="left:2357px;top:1630px;" width="26" height="16" viewBox="0 0 26 16" fill="none"><path d="M2 13 L13 2.5 L24 13" stroke="#6a6a6a" stroke-width="2.2" stroke-linecap="round" stroke-linejoin="round"/></svg>
<svg class="r" style="left:2437px;top:1637px;" width="26" height="15.0" viewBox="0 0 26 15.0" fill="none"><path d="M2 2 L13.0 13.0 L24 2" stroke="#fff" stroke-width="2.2" stroke-linejoin="round" stroke-linecap="round"/></svg>
<div class="r" style="left:2498px;top:1632px;width:2px;height:24px;background:#444;border-radius:0px;"></div>
<div class="r" style="left:2517px;top:1616px;width:94px;height:54px;background:#1f1f20;border-radius:14px;"></div>
<div class="t" style="left:2564px;top:1633.53px;font-size:23px;color:#fff;transform:translateX(-50%);">100%</div>
<div class="r" style="left:2648px;top:1642px;width:22px;height:2.4px;background:#fff;border-radius:0px;"></div>
<svg class="r" style="left:2725px;top:1630px;" width="28" height="28" viewBox="0 0 28 28" fill="none"><path d="M14 2 V26 M2 14 H26" stroke="#fff" stroke-width="2.4"/></svg>
<div class="r" style="left:2802px;top:1628px;width:36px;height:32px;border:2.3px solid #fff;border-radius:6px"></div>
<div class="t" style="left:2820px;top:1637.46px;font-size:16px;color:#fff;font-weight:700;transform:translateX(-50%);">1:1</div>
<div class="clip" style="left:164px;top:210px;width:326px;height:230px;background:#fff;border-radius:8px"><div class="r" style="left:0;top:0;width:1658px;height:1168px;transform:scale(0.1966);transform-origin:0 0"><div class="t" style="left:103px;top:107.91px;font-size:61px;color:#5557ee;font-weight:700;font-family:'Liberation Serif', serif;">Formation Of The</div><div class="t" style="left:98px;top:195.75px;font-size:60px;color:#5557ee;font-family:'Liberation Serif', serif;font-style:italic;">Earth’s Magnetic Field</div><svg class="r" style="left:0;top:0" width="1000" height="900" fill="none"><path d="M442.5,488 A190.5,190.5 0 1 0 407.5,634" stroke="#d3d4f5" stroke-width="1.45"/><rect x="64" y="469" width="8" height="12" fill="#fff"/><path d="M64.2,486 L68,476 L71.8,486 Z" fill="#d3d4f5"/><path d="M442.5,488 A158.0,158.0 0 1 0 407.5,634" stroke="#b0b1f0" stroke-width="1.45"/><rect x="130" y="486" width="8" height="12" fill="#fff"/><path d="M130.2,503 L134,493 L137.8,503 Z" fill="#b0b1f0"/><path d="M442.5,488 A130.9,130.9 0 1 0 407.5,634" stroke="#9193eb" stroke-width="1.45"/><rect x="188" y="498" width="8" height="12" fill="#fff"/><path d="M188.2,515 L192,505 L195.8,515 Z" fill="#9193eb"/><path d="M442.5,488 A108.2,108.2 0 1 0 407.5,634" stroke="#7375e4" stroke-width="1.45"/><rect x="239" y="509" width="8" height="12" fill="#fff"/><path d="M239.2,526 L243,516 L246.8,526 Z" fill="#7375e4"/><path d="M442.5,488 A90.0,90.0 0 1 0 407.5,634" stroke="#7173e4" stroke-width="1.45"/><rect x="283.6" y="519" width="8" height="12" fill="#fff"/><path d="M283.8,536 L287.6,526 L291.40000000000003,536 Z" fill="#7173e4"/><path d="M442.5,488 A77.7,77.7 0 1 0 407.5,634" stroke="#7173e4" stroke-width="1.45"/><rect x="323" y="527" width="8" height="12" fill="#fff"/><path d="M323.2,544 L327,534 L330.8,544 Z" fill="#7173e4"/><path d="M442.5,488 A78.4,78.4 0 1 1 407.5,634" stroke="#6d6fe2" stroke-width="1.45"/><path d="M442.5,488 A91.1,91.1 0 1 1 407.5,634" stroke="#7173e4" stroke-width="1.45"/><path d="M442.5,488 A109.3,109.3 0 1 1 407.5,634" stroke="#7a7ce6" stroke-width="1.45"/><path d="M442.5,488 A132.5,132.5 0 1 1 407.5,634" stroke="#9395ea" stroke-width="1.45"/><path d="M442.5,488 A159.7,159.7 0 1 1 407.5,634" stroke="#b0b1f0" stroke-width="1.45"/><path d="M442.5,488 A192.4,192.4 0 1 1 407.5,634" stroke="#d3d4f5" stroke-width="1.45"/><rect x="521" y="586" width="10" height="12" fill="#fff"/><path d="M522,590 L526,580 L530,590 Z" fill="#6466e0"/><path d="M509,366 L340,755" stroke="#6d6fe2" stroke-width="1.8"/><path d="M471,366 L382,757" stroke="#7375e2" stroke-width="1.6" stroke-dasharray="6 5"/><path d="M494,384 C 482,382 476,390 484,398 C 492,405 510,406 515,400 C 518,396 516,392 512,389" stroke="#6d6fe2" stroke-width="1.7"/><path d="M508,384 L516,386 L514,395 Z" fill="#6d6fe2"/><path d="M457,422 C 466,422 476,425 481,431" stroke="#6d6fe2" stroke-width="2.6"/><path d="M345,721 C 333,719 327,727 335,735 C 343,742 361,743 366,737 C 369,733 367,729 363,726" stroke="#6d6fe2" stroke-width="1.7"/><path d="M359,721 L367,723 L365,732 Z" fill="#6d6fe2"/><circle cx="425.5" cy="561" r="74.3" fill="#f2f2fc" stroke="#6a6ce2" stroke-width="1.8"/><path d="M436,515 L418.5,559 L434,563 Z" fill="#b5b6f6"/><path d="M418,563 L433.5,567 L415,611 Z" fill="#6466ee"/></svg><div class="t" style="left:365px;top:320.86px;font-size:14.5px;color:#8a8ce8;font-weight:700;font-family:'Liberation Serif', serif;">North</div><div class="t" style="left:367px;top:340.86px;font-size:14.5px;color:#8a8ce8;font-weight:700;font-family:'Liberation Serif', serif;">Magnetic Pole</div><div class="t" style="left:540px;top:364.90px;font-size:14.3px;color:#7173d8;font-weight:700;">Geographic</div><div class="t" style="left:540px;top:383.90px;font-size:14.3px;color:#7173d8;font-weight:700;">North Pole</div><div class="t" style="left:464px;top:402.15px;font-size:14px;color:#7173d8;font-weight:700;">1.5</div><div class="t" style="left:240px;top:727.90px;font-size:14.3px;color:#7173d8;font-weight:700;">Geographic</div><div class="t" style="left:240px;top:745.90px;font-size:14.3px;color:#7173d8;font-weight:700;">South Pole</div><div class="t" style="left:401px;top:737.90px;font-size:14.3px;color:#7173d8;font-weight:700;">South</div><div class="t" style="left:401px;top:756.90px;font-size:14.3px;color:#7173d8;font-weight:700;">Magnetic</div><div class="t" style="left:401px;top:774.90px;font-size:14.3px;color:#7173d8;font-weight:700;">Pole</div><div class="r" style="left:841px;top:99px;width:228px;height:42px;border-radius:5px;background:linear-gradient(90deg,#8587f6 0%,#b3b4f9 55%,#d3d3fb 100%)"></div><div class="t" style="left:856px;top:109.85px;font-size:23.8px;color:#fff;font-weight:700;">Earth&#x27;s Magnetic</div><div class="t" style="left:841px;top:163.09px;font-size:18.8px;color:#5a5ce6;">The Earth&#x27;s Magnetic Field Is Like A Huge And Invisible Protective Shield,</div><div class="t" style="left:841px;top:203.39px;font-size:18.8px;color:#5a5ce6;">Playing A Vital Role In The Cosmic Environment. It Effectively Resists Most</div><div class="t" style="left:841px;top:243.69px;font-size:18.8px;color:#5a5ce6;">Of The Various Types Of Rays in The Universe, Such As High-Energy</div><div class="t" style="left:841px;top:283.99px;font-size:18.8px;color:#5a5ce6;">Charged Particle Flows.</div><svg class="r" style="left:0;top:0" width="1660" height="560" fill="none"><circle cx="857" cy="408" r="17" fill="#f3f3fd" stroke="#c9cbf3" stroke-width="1.1700000000000002"/><path d="M857,470 V501" stroke="#c9cbf3" stroke-width="2"/><circle cx="936" cy="408" r="24" fill="#e4e4fb" stroke="#a9abf0" stroke-width="1.56"/><path d="M936,470 V501" stroke="#a9abf0" stroke-width="2"/><circle cx="1029" cy="408" r="31" fill="#c9caf8" stroke="#7a7ce8" stroke-width="1.8199999999999998"/><path d="M1029,470 V501" stroke="#7a7ce8" stroke-width="2"/><circle cx="1142" cy="408" r="38" fill="#b9baf7" stroke="#5a5ce6" stroke-width="2.3400000000000003"/><path d="M1142,470 V501" stroke="#5a5ce6" stroke-width="2"/><circle cx="1254" cy="408" r="31" fill="#c9caf8" stroke="#7a7ce8" stroke-width="1.8199999999999998"/><path d="M1254,470 V501" stroke="#7a7ce8" stroke-width="2"/><circle cx="1352" cy="408" r="24" fill="#e4e4fb" stroke="#a9abf0" stroke-width="1.56"/><path d="M1352,470 V501" stroke="#a9abf0" stroke-width="2"/><circle cx="1455" cy="408" r="17" fill="#f3f3fd" stroke="#c9cbf3" stroke-width="1.1700000000000002"/><path d="M1455,470 V501" stroke="#c9cbf3" stroke-width="2"/><ellipse cx="1142" cy="408" rx="54" ry="17" transform="rotate(28 1142 408)" stroke="#5a5ce6" stroke-width="2.2"/><circle cx="1142" cy="408" r="37" fill="#b9baf7" fill-opacity="0.0"/><path d="M1105,408 A37,37 0 0 1 1179,408" fill="#b9baf7" stroke="#5a5ce6" stroke-width="2.3" /></svg><div class="t" style="left:857px;top:510.73px;font-size:14.5px;color:#c9cbf3;font-weight:700;transform:translateX(-50%);">Venus</div><div class="t" style="left:936px;top:510.73px;font-size:14.5px;color:#9a9cec;font-weight:700;transform:translateX(-50%);">Mars</div><div class="t" style="left:1029px;top:510.73px;font-size:14.5px;color:#7a7ce0;font-weight:700;transform:translateX(-50%);">Jupiter</div><div class="t" style="left:1142px;top:510.73px;font-size:14.5px;color:#5052d8;font-weight:700;transform:translateX(-50%);">Saturn</div><div class="t" style="left:1254px;top:510.73px;font-size:14.5px;color:#7a7ce0;font-weight:700;transform:translateX(-50%);">Uranus</div><div class="t" style="left:1352px;top:510.73px;font-size:14.5px;color:#9a9cec;font-weight:700;transform:translateX(-50%);">Neptune</div><div class="t" style="left:1455px;top:510.73px;font-size:14.5px;color:#c9cbf3;font-weight:700;transform:translateX(-50%);">Mercury</div><div class="r" style="left:841px;top:603px;width:277px;height:42px;border-radius:5px;background:linear-gradient(90deg,#8587f6 0%,#b3b4f9 55%,#d3d3fb 100%)"></div><div class="t" style="left:1102px;top:613.85px;font-size:23.8px;color:#fff;font-weight:700;transform:translateX(-100%);">The Magnetic Field</div><div class="t" style="left:1436px;top:669.09px;font-size:18.8px;color:#5a5ce6;transform:translateX(-100%);">If These Rays Reach The Earth Without Obstruction, They Will Cause A</div><div class="t" style="left:1430.7px;top:709.09px;font-size:18.8px;color:#5a5ce6;transform:translateX(-100%);">Devastating Blow To Life On Earth. Once The Earth Loses Its Magnetic</div><div class="t" style="left:1465.6px;top:749.09px;font-size:18.8px;color:#5a5ce6;transform:translateX(-100%);">Field, All Creatures On The Earth&#x27;s Surface, Whether Complex Plants And</div><div class="t" style="left:1461.6px;top:789.09px;font-size:18.8px;color:#5a5ce6;transform:translateX(-100%);">Animals And Tiny Microorganisms, Will Find It Difficult To Survive Under The</div><div class="t" style="left:842px;top:829.09px;font-size:18.8px;color:#5a5ce6;">Radiation Of Strong Rays And Will Quickly Go To Extinction.</div><div class="r" style="left:536px;top:587px;width:441px;height:224px;background:#fff;border:2.8px solid #000"></div><div class="r" style="left:690px;top:633px;width:132px;height:132px;background:#c9c9d1;border-radius:22px;"></div><svg class="r" style="left:690px;top:633px" width="132" height="132" fill="none"><defs><linearGradient id="sg1" x1="0" y1="0" x2="0.6" y2="1"><stop offset="0" stop-color="#c6eefc"/><stop offset="1" stop-color="#d8d6fb"/></linearGradient></defs><path d="M52,38 C40,52 33,70 36,88 C40,104 60,108 72,100" stroke="url(#sg1)" stroke-width="23" stroke-linecap="round"/><path d="M97,47 C104,62 104,80 96,93" stroke="#d9d5fa" stroke-width="21" stroke-linecap="round"/></svg><div class="t" style="left:540px;top:675.13px;font-size:79px;color:#000;">John</div><div class="t" style="left:762px;top:641.74px;font-size:26.3px;color:#000;">Assinado digital</div><div class="t" style="left:762px;top:673.74px;font-size:26.3px;color:#000;">mente por:John</div><div class="t" style="left:762px;top:705.74px;font-size:26.3px;color:#000;">Data:2025.05.27</div><div class="t" style="left:762px;top:737.74px;font-size:26.3px;color:#000;">17:30:32 +08:00</div><div class="r" style="left:110px;top:879px;width:147px;height:42px;border-radius:5px;background:linear-gradient(90deg,#8587f6 0%,#b3b4f9 55%,#d3d3fb 100%)"></div><div class="t" style="left:125px;top:890.97px;font-size:21.3px;color:#fff;font-weight:700;">Solar Wind</div><div class="t" style="left:110px;top:955.09px;font-size:18.8px;color:#5a5ce6;">At The Same Time, The Atmosphere Will Also Lose The Protection Of The Magnetic Field And Be Gradually</div><div class="t" style="left:110px;top:995.09px;font-size:18.8px;color:#5a5ce6;">Stripped Away By Forces Such As The Solar Wind, And Eventually Disappear. It Can Be Said That The</div><div class="t" style="left:110px;top:1035.09px;font-size:18.8px;color:#5a5ce6;">Earth&#x27;s Magnetic Field Provides An Indispensable Guarantee For The Reproduction Of Life On Earth And</div><div class="t" style="left:110px;top:1075.09px;font-size:18.8px;color:#5a5ce6;">The Stable Existence Of The Atmosphere By Shielding Dangerous Substances Such As Solar Particles.</div></div><div class="r" style="left:0;top:0;width:326px;height:230px;background:rgba(40,40,60,0.15);clip-path:polygon(0 0,326px 0,326px 230px,0 230px,0 0px,0px 0px,0px 229px,295px 229px,295px 0px,0 0px)"></div><div class="r" style="left:0px;top:0px;width:295px;height:229px;border:4px solid #7b7ef7;border-radius:6px"></div></div>
<div class="clip" style="left:164px;top:544px;width:326px;height:230px;background:#fff;border-radius:8px"><div class="r" style="left:0;top:0;width:1658px;height:1168px;transform:scale(0.1966);transform-origin:0 0"><div class="r" style="left:67px;top:65px;width:161px;height:41px;border-radius:5px;background:linear-gradient(90deg,#8587f6 0%,#b3b4f9 55%,#d3d3fb 100%)"></div><div class="t" style="left:76px;top:74.85px;font-size:23.8px;color:#fff;font-weight:700;">Introduction</div><div class="r" style="left:749px;top:65px;width:2.5px;height:750px;background:#6d6fe2;border-radius:0px;"></div><div class="r" style="left:795px;top:59px;width:205px;height:42px;border-radius:5px;background:linear-gradient(90deg,#8587f6 0%,#b3b4f9 55%,#d3d3fb 100%)"></div><div class="t" style="left:806px;top:68.94px;font-size:23.7px;color:#fff;font-weight:700;">Dynamo Theory</div><div class="t" style="left:68px;top:144.09px;font-size:18.8px;color:#5a5ce6;">The Earth&#x27;s Magnetic Field, A Crucial Feature Of Our Planet, Has Long</div><div class="t" style="left:68px;top:184.29px;font-size:18.8px;color:#5a5ce6;">Intrigued Scientists. It Acts As A Shield Against Harmful Cosmic Radiation</div><div class="t" style="left:68px;top:224.49px;font-size:18.8px;color:#5a5ce6;">And Solar Particles, Playing A Vital Role In Protecting Life On Earth And</div><div class="t" style="left:68px;top:264.69px;font-size:18.8px;color:#5a5ce6;">Maintaining The Stability Of The Atmosphere. Understanding Its Formation</div><div class="t" style="left:68px;top:304.89px;font-size:18.8px;color:#5a5ce6;">Is Fundamental To Various Scientific Disciplines, From Geophysics To</div><div class="t" style="left:68px;top:345.09px;font-size:18.8px;color:#5a5ce6;">Astrobiology.</div><div class="t" style="left:795px;top:139.09px;font-size:18.8px;color:#5a5ce6;">The Most Widely - Accepted Theory For The Formation Of The Earth&#x27;s Magnetic Field Is</div><div class="t" style="left:795px;top:178.79px;font-size:18.8px;color:#5a5ce6;">The Dynamo Theory. At The Core Of This Theory Is The Motion Of Molten Iron And Nickel</div><div class="t" style="left:795px;top:218.49px;font-size:18.8px;color:#5a5ce6;">In The Earth&#x27;s Outer Core. The Outer Core Is A Fluid Layer, Heated By The Decay Of</div><div class="t" style="left:795px;top:258.19px;font-size:18.8px;color:#5a5ce6;">Radioactive Elements And Residual Heat From The Planet&#x27;s Formation. This Heat Creates</div><div class="t" style="left:795px;top:297.89px;font-size:18.8px;color:#5a5ce6;">Convection Currents Within The Fluid.</div><div class="t" style="left:795px;top:339.09px;font-size:18.8px;color:#5a5ce6;">As The Earth Rotates, The Coriolis Force Acts On These Convection Flows, Organizing</div><div class="t" style="left:795px;top:378.79px;font-size:18.8px;color:#5a5ce6;">Them Into Patterns That Generate Electric Currents. According To Ampere&#x27;s Law, Electric</div><div class="t" style="left:795px;top:418.49px;font-size:18.8px;color:#5a5ce6;">Currents Produce Magnetic Fields. Thus, The Combination Of Convection And Rotation In</div><div class="t" style="left:795px;top:458.19px;font-size:18.8px;color:#5a5ce6;">The Outer Core Creates A Self - Sustaining Dynamo Process That Generates The Earth&#x27;s</div><div class="t" style="left:795px;top:497.89px;font-size:18.8px;color:#5a5ce6;">Magnetic Field.</div><div class="r" style="left:797px;top:601px;width:281px;height:39px;border-radius:5px;background:linear-gradient(90deg,#8587f6 0%,#b3b4f9 55%,#d3d3fb 100%)"></div><div class="t" style="left:808px;top:609.94px;font-size:23.7px;color:#fff;font-weight:700;">Role Of The Inner Core</div><div class="t" style="left:795px;top:671.09px;font-size:18.8px;color:#5a5ce6;">The Solid Inner Core Also Plays A Role In The Magnetic Field&#x27;s Formation. Although It Is</div><div class="t" style="left:795px;top:711.09px;font-size:18.8px;color:#5a5ce6;">Solid, It Interacts With The Fluid Outer Core. The Growth And Crystallization Processes</div><div class="t" style="left:795px;top:751.09px;font-size:18.8px;color:#5a5ce6;">Within The Inner Core Can Affect The Dynamics Of The Outer Core, Influencing The</div><div class="t" style="left:795px;top:791.09px;font-size:18.8px;color:#5a5ce6;">Convection Patterns And, Consequently, The Magnetic Field Generation.</div><div class="r" style="left:67px;top:855px;width:290px;height:38px;border-radius:5px;background:linear-gradient(90deg,#8587f6 0%,#b3b4f9 55%,#d3d3fb 100%)"></div><div class="t" style="left:78px;top:862.94px;font-size:23.7px;color:#fff;font-weight:700;">Historical Perspectives</div><div class="t" style="left:68px;top:925.09px;font-size:18.8px;color:#5a5ce6;">Early Speculations About The Earth&#x27;s Magnetic Field Date Back Centuries. Ancient Mariners Noticed The Influence Of The Magnetic Field On Compass Needles, But It</div><div class="t" style="left:68px;top:965.39px;font-size:18.8px;color:#5a5ce6;">Was Not Until The Scientific Revolution That More Systematic Studies Began. Scientists Such As William Gilbert In The 17th Century Made Significant Contributions By</div><div class="t" style="left:68px;top:1005.69px;font-size:18.8px;color:#5a5ce6;">Suggesting That The Earth Was A Giant Magnet. Over Time, With The Development Of More Advanced Instruments And Theories, Our Understanding Of The Magnetic</div><div class="t" style="left:68px;top:1045.99px;font-size:18.8px;color:#5a5ce6;">Field&#x27;s Origin Has Evolved.</div><svg class="r" style="left:0;top:0" width="800" height="900" fill="none"><path d="M270,440 A150,155 0 0 0 270,750 Z" fill="#b5b6f7" stroke="#5a5ce6" stroke-width="4"/><ellipse cx="270" cy="595" rx="40" ry="155" fill="#dcdcfa" stroke="#5a5ce6" stroke-width="4"/><ellipse cx="275" cy="595" rx="25" ry="118" fill="#6a6cf0" stroke="#5a5ce6" stroke-width="3"/><ellipse cx="320" cy="595" rx="22" ry="95" fill="#b5b6f7" stroke="#5a5ce6" stroke-width="3"/><ellipse cx="345" cy="595" rx="15" ry="60" fill="#dcdcfa" stroke="#5a5ce6" stroke-width="3"/><circle cx="355" cy="595" r="32" fill="#7577ee"/><path d="M240,455 L300,400 M300,480 L350,420 M335,510 L385,450 M360,560 L410,510 M400,620 L440,614 M330,650 L440,664 M320,700 L440,716 M270,740 L440,767" stroke="#7a7ce8" stroke-width="2"/></svg><div class="t" style="left:222px;top:406.46px;font-size:16px;color:#5a5ce6;font-weight:700;">Crust</div><div class="t" style="left:294px;top:438.46px;font-size:16px;color:#5a5ce6;font-weight:700;">Mantle</div><div class="t" style="left:338px;top:482.46px;font-size:16px;color:#5a5ce6;font-weight:700;">Outer Core</div><div class="t" style="left:383px;top:531.46px;font-size:16px;color:#5a5ce6;font-weight:700;">Inner Core</div><div class="t" style="left:445px;top:604.46px;font-size:16px;color:#6a6ce2;">6370Miles (5,150 Kilometers)</div><div class="t" style="left:445px;top:654.46px;font-size:16px;color:#6a6ce2;">1220Miles (2,220 Kilometers)</div><div class="t" style="left:445px;top:706.46px;font-size:16px;color:#6a6ce2;">1800Miles (2,900 Kilometers)</div><div class="t" style="left:445px;top:757.46px;font-size:16px;color:#6a6ce2;">3.10-23 Miles (5-70-40 Kilometers)</div></div><div class="r" style="left:0;top:0;width:326px;height:230px;background:rgba(40,40,60,0.15);clip-path:polygon(0 0,326px 0,326px 230px,0 230px,0 0px,0px 0px,0px 60px,295px 60px,295px 0px,0 0px)"></div><div class="r" style="left:0px;top:0px;width:295px;height:60px;border:4px solid #7b7ef7;border-radius:6px"></div></div>
<div class="clip" style="left:164px;top:878px;width:326px;height:230px;background:#fff;border-radius:8px"><div class="r" style="left:0;top:0;width:1658px;height:1168px;transform:scale(0.1966);transform-origin:0 0"><div class="t" style="left:64px;top:71.40px;font-size:64px;color:#5557ee;font-weight:700;font-family:'Liberation Serif', serif;"><i style="font-weight:400">Evidence</i> For The Theories</div><svg class="r" style="left:0;top:0" width="1658" height="1168" fill="none"><circle cx="205" cy="292" r="80" fill="#b9baf7" stroke="#6a6ce2" stroke-width="4"/><circle cx="492" cy="292" r="32" fill="#b9baf7" stroke="#6a6ce2" stroke-width="4"/><path d="M200,230 L492,262 M200,354 L492,322 M110,292 H525" stroke="#6a6ce2" stroke-width="3" stroke-dasharray="8 6"/><path d="M583,202 V1089 M1110,202 V1089" stroke="#8a8ce8" stroke-width="4"/><circle cx="650" cy="628" r="21" fill="#c9caf8" stroke="#7a7ce8" stroke-width="3"/><path d="M650,700 V740" stroke="#9a9cec" stroke-width="3"/><circle cx="744" cy="628" r="29" fill="#c9caf8" stroke="#7a7ce8" stroke-width="3"/><path d="M744,700 V740" stroke="#9a9cec" stroke-width="3"/><circle cx="855" cy="628" r="36" fill="#c9caf8" stroke="#7a7ce8" stroke-width="3"/><path d="M855,700 V740" stroke="#9a9cec" stroke-width="3"/><circle cx="990" cy="628" r="46" fill="#c9caf8" stroke="#7a7ce8" stroke-width="3"/><path d="M990,700 V740" stroke="#9a9cec" stroke-width="3"/><ellipse cx="990" cy="628" rx="68" ry="22" transform="rotate(28 990 628)" stroke="#5a5ce6" stroke-width="4"/></svg><div class="r" style="left:77px;top:465px;width:309px;height:40px;border-radius:5px;background:linear-gradient(90deg,#8587f6 0%,#b3b4f9 55%,#d3d3fb 100%)"></div><div class="t" style="left:90px;top:473.68px;font-size:24px;color:#fff;font-weight:700;">Influence Of Tidal Forces</div><div class="r" style="left:634px;top:222px;width:296px;height:38px;border-radius:5px;background:linear-gradient(90deg,#8587f6 0%,#b3b4f9 55%,#d3d3fb 100%)"></div><div class="t" style="left:646px;top:229.68px;font-size:24px;color:#fff;font-weight:700;">Geomagnetic Reversals</div><div class="r" style="left:1164px;top:222px;width:335px;height:40px;border-radius:5px;background:linear-gradient(90deg,#8587f6 0%,#b3b4f9 55%,#d3d3fb 100%)"></div><div class="t" style="left:1176px;top:230.68px;font-size:24px;color:#fff;font-weight:700;">Seismic And Geodetic Data</div><div class="t" style="left:77px;top:533.09px;font-size:18.8px;color:#5a5ce6;">Some Studies Have Explored The Potential</div><div class="t" style="left:77px;top:574.09px;font-size:18.8px;color:#5a5ce6;">Influence Of Tidal Forces, Especially Those Exerted</div><div class="t" style="left:77px;top:614.09px;font-size:18.8px;color:#5a5ce6;">By The Moon. When The Moon Approaches The</div><div class="t" style="left:77px;top:654.09px;font-size:18.8px;color:#5a5ce6;">Earth, It Causes Tidal Fluctuations In The Earth&#x27;s</div><div class="t" style="left:77px;top:695.09px;font-size:18.8px;color:#5a5ce6;">Oceans. These Fluctuations Can Generate Frictional</div><div class="t" style="left:77px;top:735.09px;font-size:18.8px;color:#5a5ce6;">Forces On The Earth&#x27;s Surface</div><div class="t" style="left:77px;top:825.09px;font-size:18.8px;color:#5a5ce6;">In Theory, This Friction Could, To Some Extent,</div><div class="t" style="left:77px;top:865.09px;font-size:18.8px;color:#5a5ce6;">Affect The Earth&#x27;s Internal Heat Distribution And</div><div class="t" style="left:77px;top:905.09px;font-size:18.8px;color:#5a5ce6;">The Dynamics Of The Core - Mantle System,</div><div class="t" style="left:77px;top:946.09px;font-size:18.8px;color:#5a5ce6;">Potentially Influencing The Magnetic Field. However,</div><div class="t" style="left:77px;top:986.09px;font-size:18.8px;color:#5a5ce6;">The Overall Impact Of Tidal Forces On The</div><div class="t" style="left:77px;top:1026.09px;font-size:18.8px;color:#5a5ce6;">Magnetic Field Is Considered Relatively Minor</div><div class="t" style="left:77px;top:1067.09px;font-size:18.8px;color:#5a5ce6;">Compared To The Dynamo Process.</div><div class="t" style="left:634px;top:291.09px;font-size:18.8px;color:#5a5ce6;">One Of The Most Compelling Pieces Of Evidence</div><div class="t" style="left:634px;top:330.09px;font-size:18.8px;color:#5a5ce6;">For The Dynamo Theory Is The Occurrence Of</div><div class="t" style="left:634px;top:370.09px;font-size:18.8px;color:#5a5ce6;">Geomagnetic Reversals. Geological Studies Of</div><div class="t" style="left:634px;top:410.09px;font-size:18.8px;color:#5a5ce6;">Ancient Rocks Have Revealed That The Earth&#x27;s</div><div class="t" style="left:634px;top:451.09px;font-size:18.8px;color:#5a5ce6;">Magnetic Field Has Reversed Its Polarity Many</div><div class="t" style="left:634px;top:491.09px;font-size:18.8px;color:#5a5ce6;">Times In The Past.</div><div class="t" style="left:634px;top:812.09px;font-size:18.8px;color:#5a5ce6;">This Phenomenon Can Be Explained By Changes</div><div class="t" style="left:634px;top:852.09px;font-size:18.8px;color:#5a5ce6;">In The Convective Patterns And Electric Currents</div><div class="t" style="left:634px;top:893.09px;font-size:18.8px;color:#5a5ce6;">Within The Outer Core. As The Fluid Motions In</div><div class="t" style="left:634px;top:933.09px;font-size:18.8px;color:#5a5ce6;">The Core Are Complex And Chaotic, They Can</div><div class="t" style="left:634px;top:973.09px;font-size:18.8px;color:#5a5ce6;">Lead To Disruptions In The Magnetic Field</div><div class="t" style="left:634px;top:1014.09px;font-size:18.8px;color:#5a5ce6;">Generation, Causing Reversals.</div><div class="t" style="left:1164px;top:312.09px;font-size:18.8px;color:#5a5ce6;">Seismic Data Provides Insights Into The</div><div class="t" style="left:1164px;top:352.09px;font-size:18.8px;color:#5a5ce6;">Structure And Properties Of The Earth&#x27;s Interior.</div><div class="t" style="left:1164px;top:392.09px;font-size:18.8px;color:#5a5ce6;">By Analyzing How Seismic Waves Travel</div><div class="t" style="left:1164px;top:433.09px;font-size:18.8px;color:#5a5ce6;">Through The Core, Scientists Can Determine</div><div class="t" style="left:1164px;top:473.09px;font-size:18.8px;color:#5a5ce6;">The Physical State (Solid Or Fluid), Composition,</div><div class="t" style="left:1164px;top:511.09px;font-size:18.8px;color:#5a5ce6;">And Density Of The Materials. Geodetic</div><div class="t" style="left:1164px;top:552.09px;font-size:18.8px;color:#5a5ce6;">Measurements, Such As Those From Satellite -</div><div class="t" style="left:1164px;top:592.09px;font-size:18.8px;color:#5a5ce6;">Based Gravity And Magnetic Field Surveys, Also</div><div class="t" style="left:1164px;top:632.09px;font-size:18.8px;color:#5a5ce6;">Contribute To Our Understanding Of The Core -</div><div class="t" style="left:1164px;top:673.09px;font-size:18.8px;color:#5a5ce6;">Mantle Dynamics And The Magnetic Field</div><div class="t" style="left:1164px;top:713.09px;font-size:18.8px;color:#5a5ce6;">Generation Process.</div></div></div>
<div class="r" style="left:164px;top:878px;width:326px;height:230px;border-radius:8px;background:linear-gradient(90deg,rgba(40,40,60,0) 72%,rgba(40,40,60,0.16) 100%)"></div>
<div class="clip" style="left:164px;top:1212px;width:326px;height:230px;background:#fff;border-radius:8px"><div class="r" style="left:0;top:0;width:1658px;height:1168px;transform:scale(0.1966);transform-origin:0 0"><div class="r" style="left:70px;top:72px;width:410px;height:41px;border-radius:5px;background:linear-gradient(90deg,#8587f6 0%,#b3b4f9 55%,#d3d3fb 100%)"></div><div class="t" style="left:84px;top:80.68px;font-size:24px;color:#fff;font-weight:700;">Implications And Future Research</div><div class="r" style="left:764px;top:72px;width:146px;height:41px;border-radius:5px;background:linear-gradient(90deg,#8587f6 0%,#b3b4f9 55%,#d3d3fb 100%)"></div><div class="t" style="left:776px;top:80.68px;font-size:24px;color:#fff;font-weight:700;">Conclusion</div><svg class="r" style="left:0;top:0" width="1658" height="1168" fill="none"><path d="M716,72 V1116" stroke="#8a8ce8" stroke-width="4"/><rect x="270" y="470" width="60" height="24" fill="#b9baf7" stroke="#6a6ce2" stroke-width="3"/><rect x="355" y="470" width="60" height="24" fill="#b9baf7" stroke="#6a6ce2" stroke-width="3"/><rect x="330" y="462" width="25" height="40" rx="10" fill="#b9baf7" stroke="#6a6ce2" stroke-width="3"/><path d="M185,650 L310,530 M400,530 L520,650" stroke="#6a6ce2" stroke-width="3"/><path d="M120,715 L165,620 L200,715 Z M430,715 L475,620 L510,715 Z" fill="#b9baf7" stroke="#6a6ce2" stroke-width="3"/><circle cx="175" cy="640" r="38" fill="#b9baf7" stroke="#6a6ce2" stroke-width="3"/><circle cx="465" cy="640" r="38" fill="#b9baf7" stroke="#6a6ce2" stroke-width="3"/><g transform="rotate(38 1050 830)"><rect x="820" y="770" width="460" height="120" fill="#b5b6f7" stroke="#7a7ce8" stroke-width="3"/><path d="M860,770 V890 M900,770 V890 M940,770 V890 M980,770 V890 M1120,770 V890 M1160,770 V890 M1200,770 V890 M1240,770 V890 M820,830 H1280" stroke="#e0e0fb" stroke-width="3"/><rect x="1000" y="730" width="110" height="200" rx="40" fill="#6a6cf0"/><path d="M1000,930 L970,990 H1140 L1110,930 Z" fill="#7b7df2"/><path d="M1020,730 L1055,640 L1090,730 Z" fill="#8a8cf4"/></g></svg><div class="t" style="left:71px;top:155.09px;font-size:18.8px;color:#5a5ce6;">The Earth&#x27;s Magnetic Field Has Far - Reaching Implications. It</div><div class="t" style="left:71px;top:196.09px;font-size:18.8px;color:#5a5ce6;">Affects The Behavior Of Migratory Animals That Use The</div><div class="t" style="left:71px;top:237.09px;font-size:18.8px;color:#5a5ce6;">Magnetic Field For Navigation. It Also Has An Impact On Modern</div><div class="t" style="left:71px;top:276.09px;font-size:18.8px;color:#5a5ce6;">Technological Systems, Such As Satellite Communications And</div><div class="t" style="left:71px;top:317.09px;font-size:18.8px;color:#5a5ce6;">Power Grids, Which Can Be Disrupted During Geomagnetic</div><div class="t" style="left:71px;top:356.09px;font-size:18.8px;color:#5a5ce6;">Storms.</div><div class="t" style="left:71px;top:799.09px;font-size:18.8px;color:#5a5ce6;">Future Research Could Focus On Improving Our Understanding Of</div><div class="t" style="left:71px;top:840.09px;font-size:18.8px;color:#5a5ce6;">The Complex Interactions Within The Earth&#x27;s Core, Especially How</div><div class="t" style="left:71px;top:879.09px;font-size:18.8px;color:#5a5ce6;">Small - Scale Processes Contribute To The Large - Scale Magnetic</div><div class="t" style="left:71px;top:920.09px;font-size:18.8px;color:#5a5ce6;">Field Generation. Additionally, Studying The Magnetic Fields Of</div><div class="t" style="left:71px;top:959.09px;font-size:18.8px;color:#5a5ce6;">Other Planets In The Solar System, Such As Mars And Jupiter, Can</div><div class="t" style="left:71px;top:1000.09px;font-size:18.8px;color:#5a5ce6;">Provide Comparative Insights And Help Refine Our Theories About</div><div class="t" style="left:71px;top:1039.09px;font-size:18.8px;color:#5a5ce6;">The Earth&#x27;s Magnetic Field Formation.</div><div class="t" style="left:764px;top:149.09px;font-size:18.8px;color:#5a5ce6;">The Formation Of The Earth&#x27;s Magnetic Field Is A</div><div class="t" style="left:764px;top:189.09px;font-size:18.8px;color:#5a5ce6;">Complex And Fascinating Process. While The Dynamo</div><div class="t" style="left:764px;top:229.09px;font-size:18.8px;color:#5a5ce6;">Theory Provides A Robust Framework For Understanding</div><div class="t" style="left:764px;top:269.09px;font-size:18.8px;color:#5a5ce6;">Its Origin, There Are Still Many Aspects That Remain To</div><div class="t" style="left:764px;top:309.09px;font-size:18.8px;color:#5a5ce6;">Be Explored. Continued Research In This Area Will Not</div><div class="t" style="left:764px;top:350.09px;font-size:18.8px;color:#5a5ce6;">Only Deepen Our Knowledge Of The Earth&#x27;s Interior But</div><div class="t" style="left:764px;top:389.09px;font-size:18.8px;color:#5a5ce6;">Also Have Important Implications For Various Fields,</div><div class="t" style="left:764px;top:430.09px;font-size:18.8px;color:#5a5ce6;">From Protecting Life On Earth To Advancing Our</div><div class="t" style="left:764px;top:469.09px;font-size:18.8px;color:#5a5ce6;">Understanding Of The Universe.</div></div></div>
<div class="r" style="left:164px;top:1212px;width:326px;height:230px;border-radius:8px;background:radial-gradient(ellipse 140px 90px at 326px 0px,rgba(40,40,60,0.16),rgba(40,40,60,0) 100%)"></div>
<div class="clip" style="left:164px;top:1546px;width:326px;height:146px;background:#fff;border-radius:8px 8px 0 0"><div class="r" style="left:0;top:0;width:1658px;height:1168px;transform:scale(0.1966);transform-origin:0 0"><div class="t" style="left:71px;top:70.33px;font-size:60.5px;color:#5557ee;font-weight:700;font-family:'Liberation Serif', serif;">Satellite Communications And <i style="font-weight:400">Power Grids</i></div><div class="r" style="left:69px;top:194px;width:411px;height:107px;background:linear-gradient(90deg,#8587f6,#a9aaf8 55%,#d0d1fb)"></div><div class="r" style="left:480px;top:194px;width:555px;height:107px;background:linear-gradient(90deg,#8587f6,#a9aaf8 55%,#d0d1fb)"></div><div class="r" style="left:1035px;top:194px;width:560px;height:107px;background:linear-gradient(90deg,#8587f6,#a9aaf8 55%,#d0d1fb)"></div><svg class="r" style="left:0;top:0" width="1658" height="1168" fill="none"><path d="M69,194 V1168 M1595,194 V1168 M480,194 V1168 M1035,194 V1168 M69,483 H1595 M69,666 H1595 M69,301 H1595" stroke="#b0b2f0" stroke-width="3"/></svg><div class="t" style="left:275px;top:236.38px;font-size:22px;color:#fff;transform:translateX(-50%);">Comparison Dimensions</div><div class="t" style="left:757px;top:236.38px;font-size:22px;color:#fff;transform:translateX(-50%);">Satellite Communications</div><div class="t" style="left:1315px;top:236.38px;font-size:22px;color:#fff;transform:translateX(-50%);">Power Grid</div><div class="t" style="left:275px;top:381.38px;font-size:22px;color:#4a4cd8;font-weight:700;transform:translateX(-50%);">Global Coverage(As Of 2024)</div><div class="t" style="left:275px;top:563.38px;font-size:22px;color:#4a4cd8;font-weight:700;transform:translateX(-50%);">Main Interfering Factors</div><div class="t" style="left:757px;top:343.07px;font-size:20px;color:#5a5ce6;transform:translateX(-50%);">Cover More Than 70% Of The Earth&#x27;s Surface</div><div class="t" style="left:1315px;top:343.07px;font-size:20px;color:#5a5ce6;transform:translateX(-50%);">About 68% Of The Global Population Is Covered</div><div class="t" style="left:757px;top:375.07px;font-size:20px;color:#5a5ce6;transform:translateX(-50%);">Cover More Than 70% Of The Earth&#x27;s Surface</div><div class="t" style="left:1315px;top:375.07px;font-size:20px;color:#5a5ce6;transform:translateX(-50%);">About 68% Of The Global Population Is Covered</div><div class="t" style="left:757px;top:407.07px;font-size:20px;color:#5a5ce6;transform:translateX(-50%);">Cover More Than 70% Of The Earth&#x27;s Surface</div><div class="t" style="left:1315px;top:407.07px;font-size:20px;color:#5a5ce6;transform:translateX(-50%);">About 68% Of The Global Population Is Covered</div><div class="t" style="left:757px;top:523.07px;font-size:20px;color:#5a5ce6;transform:translateX(-50%);">Solar Storms, Space Debris, And Severe</div><div class="t" style="left:1315px;top:523.07px;font-size:20px;color:#5a5ce6;transform:translateX(-50%);">Natural Disasters (Such As Earthquakes,</div><div class="t" style="left:757px;top:555.07px;font-size:20px;color:#5a5ce6;transform:translateX(-50%);">Solar Storms, Space Debris, And Severe</div><div class="t" style="left:1315px;top:555.07px;font-size:20px;color:#5a5ce6;transform:translateX(-50%);">Natural Disasters (Such As Earthquakes,</div><div class="t" style="left:757px;top:587.07px;font-size:20px;color:#5a5ce6;transform:translateX(-50%);">Solar Storms, Space Debris, And Severe</div><div class="t" style="left:1315px;top:587.07px;font-size:20px;color:#5a5ce6;transform:translateX(-50%);">Natural Disasters (Such As Earthquakes,</div><div class="t" style="left:757px;top:619.07px;font-size:20px;color:#5a5ce6;transform:translateX(-50%);">Solar Storms, Space Debris, And Severe</div><div class="t" style="left:1315px;top:619.07px;font-size:20px;color:#5a5ce6;transform:translateX(-50%);">Natural Disasters (Such As Earthquakes,</div><div class="t" style="left:757px;top:723.07px;font-size:20px;color:#5a5ce6;transform:translateX(-50%);">Low Earth Orbit Satellite Communication</div><div class="t" style="left:1315px;top:693.07px;font-size:20px;color:#5a5ce6;transform:translateX(-50%);">The Data Transmission Rate Of Smart Grids</div><div class="t" style="left:757px;top:755.07px;font-size:20px;color:#5a5ce6;transform:translateX(-50%);">Low Earth Orbit Satellite Communication</div><div class="t" style="left:1315px;top:725.07px;font-size:20px;color:#5a5ce6;transform:translateX(-50%);">The Data Transmission Rate Of Smart Grids</div></div></div>
<div class="r" style="left:474px;top:82px;width:832px;height:1167px;background:#323133;border:2px solid #49494a;border-radius:14px;box-shadow:0 4px 14px rgba(0,0,0,0.22),0 6px 50px rgba(0,0,0,0.2)"></div>
<div class="r" style="left:524px;top:132px;width:231px;height:247px;background:#222123;border-radius:23px;"></div>
<div class="r" style="left:774px;top:132px;width:231px;height:247px;background:#222123;border-radius:23px;"></div>
<div class="r" style="left:1024px;top:132px;width:231px;height:247px;background:#222123;border-radius:23px;"></div>
<div class="r" style="left:1017px;top:130px;width:254px;height:255px;border:8px solid #ef4a45;border-radius:12px"></div>
<div class="t" style="left:640px;top:318.36px;font-size:23.2px;color:#fff;font-weight:700;transform:translateX(-50%);">Abrir arquivo</div>
<div class="t" style="left:889.5px;top:318.53px;font-size:23px;color:#fff;font-weight:700;transform:translateX(-50%);">Doc. em blanco</div>
<div class="t" style="left:1139.5px;top:318.95px;font-size:22.5px;color:#fff;font-weight:700;transform:translateX(-50%);">Nova Janela</div>
<svg class="r" style="left:588px;top:170px;" width="96" height="97" viewBox="0 0 96 97" fill="none"><defs><linearGradient id="fg" x1="0" y1="0" x2="0" y2="1"><stop offset="0" stop-color="#7d8bf9"/><stop offset="1" stop-color="#4154f5"/></linearGradient></defs>
<path d="M2 30 a6 6 0 0 1 6 -6 H88 a6 6 0 0 1 6 6 V60 H2 Z" fill="#2f40e6"/>
<g transform="rotate(-12 30 30)"><rect x="8" y="14" width="40" height="50" rx="3" fill="#f4f4f6"/></g>
<g transform="rotate(-8 40 30)"><rect x="16" y="6" width="50" height="56" rx="3" fill="#f8f8fa"/></g>
<g transform="rotate(9 60 30)"><rect x="34" y="2" width="56" height="56" rx="3" fill="#ffffff"/><rect x="40" y="18" width="11" height="4" fill="#ffc935"/><rect x="74" y="30" width="10" height="4" fill="#6ee3b5"/><rect x="38" y="36" width="10" height="4" fill="#7cc4f8"/><rect x="42" y="9" width="20" height="3" fill="#eeeeee"/></g>
<path d="M1 40 a5 5 0 0 1 5 -5 H21 a4 4 0 0 1 3 1.3 L30 43 H89 a6 6 0 0 1 6 6 L93 91 a5 5 0 0 1 -5 5 H9 a5 5 0 0 1 -5 -5 Z" fill="url(#fg)"/></svg>
<svg class="r" style="left:844px;top:172px;" width="90" height="100" viewBox="0 0 90 100" fill="none"><defs><linearGradient id="dg" x1="0" y1="0" x2="0" y2="1"><stop offset="0" stop-color="#e79af2"/><stop offset="0.5" stop-color="#f6ad96"/><stop offset="1" stop-color="#fec65a"/></linearGradient>
<filter id="ds" x="-50%" y="-50%" width="200%" height="200%"><feGaussianBlur stdDeviation="3"/></filter></defs>
<g transform="rotate(-4 40 50)"><rect x="3" y="10" width="62" height="88" rx="6" fill="url(#dg)"/></g>
<g transform="rotate(4 50 50)"><rect x="18" y="0" width="66" height="92" rx="7" fill="#ffffff"/></g>
<circle cx="51" cy="52" r="15" fill="#a8aaf8" filter="url(#ds)" opacity="0.6"/>
<circle cx="50" cy="48" r="14" fill="#6e71f1"/><path d="M50 40 V56 M42 48 H58" stroke="#fff" stroke-width="2.2"/></svg>
<svg class="r" style="left:1086px;top:176px;" width="100" height="88" viewBox="0 0 100 88" fill="none"><defs><linearGradient id="wg" x1="0" y1="0" x2="0" y2="1"><stop offset="0" stop-color="#ffffff"/><stop offset="1" stop-color="#cdcdfa"/></linearGradient></defs>
<rect x="0" y="0" width="100" height="88" rx="4" fill="url(#wg)"/><path d="M4 0 H96 a4 4 0 0 1 4 4 V12 H0 V4 a4 4 0 0 1 4 -4 Z" fill="#5f73fa"/>
<circle cx="82" cy="6.2" r="2" fill="#b9c2fc"/><circle cx="88" cy="6.2" r="2" fill="#b9c2fc"/><circle cx="94" cy="6.2" r="2" fill="#b9c2fc"/>
<text x="15" y="42" font-family="Liberation Sans" font-size="22" fill="#b8bcf8" font-weight="400">Aa</text>
<rect x="54" y="30" width="30" height="3.5" rx="1.75" fill="#b8bcf8"/><rect x="54" y="38" width="20" height="3.5" rx="1.75" fill="#b8bcf8"/>
<rect x="16" y="53" width="28" height="3.5" rx="1.75" fill="#b8bcf8"/><rect x="16" y="61" width="28" height="3.5" rx="1.75" fill="#b8bcf8"/><rect x="16" y="69" width="20" height="3.5" rx="1.75" fill="#b8bcf8"/>
<rect x="54" y="53" width="30" height="22" rx="3" fill="#b8bcf8"/><circle cx="61" cy="59" r="1.8" fill="#e6e8fd"/><path d="M57 72 a6 6 0 0 1 6 -6 V72 Z M64 72 a8 8 0 0 1 8 -8 H80 V72 Z" fill="#e6e8fd"/></svg>
<div class="t" style="left:533px;top:445.84px;font-size:25px;color:#ececec;">Recentes</div>
<svg class="r" style="left:1115px;top:435px;" width="42" height="42" viewBox="0 0 42 42" fill="none"><circle cx="17" cy="17" r="14.5" stroke="#fff" stroke-width="2.3"/><path d="M27.5 27.5 L37 37" stroke="#fff" stroke-width="2.3"/></svg>
<svg class="r" style="left:1191px;top:436px;" width="48" height="40" viewBox="0 0 48 40" fill="none"><path d="M12 35 H36 a9.5 9.5 0 0 0 1.5 -18.9 A13 13 0 0 0 12.5 13.5 A10.8 10.8 0 0 0 12 35 Z" stroke="#fff" stroke-width="2.3" stroke-linejoin="round"/></svg>
<div class="clip" style="left:538px;top:541px;width:64px;height:46px;background:#fff"><div class="r" style="left:0;top:0;width:1658px;height:1168px;transform:scale(0.038600723763570564);transform-origin:0 0"><div class="t" style="left:103px;top:107.91px;font-size:61px;color:#5557ee;font-weight:700;font-family:'Liberation Serif', serif;">Formation Of The</div><div class="t" style="left:98px;top:195.75px;font-size:60px;color:#5557ee;font-family:'Liberation Serif', serif;font-style:italic;">Earth’s Magnetic Field</div><svg class="r" style="left:0;top:0" width="1000" height="900" fill="none"><path d="M442.5,488 A190.5,190.5 0 1 0 407.5,634" stroke="#d3d4f5" stroke-width="1.45"/><rect x="64" y="469" width="8" height="12" fill="#fff"/><path d="M64.2,486 L68,476 L71.8,486 Z" fill="#d3d4f5"/><path d="M442.5,488 A158.0,158.0 0 1 0 407.5,634" stroke="#b0b1f0" stroke-width="1.45"/><rect x="130" y="486" width="8" height="12" fill="#fff"/><path d="M130.2,503 L134,493 L137.8,503 Z" fill="#b0b1f0"/><path d="M442.5,488 A130.9,130.9 0 1 0 407.5,634" stroke="#9193eb" stroke-width="1.45"/><rect x="188" y="498" width="8" height="12" fill="#fff"/><path d="M188.2,515 L192,505 L195.8,515 Z" fill="#9193eb"/><path d="M442.5,488 A108.2,108.2 0 1 0 407.5,634" stroke="#7375e4" stroke-width="1.45"/><rect x="239" y="509" width="8" height="12" fill="#fff"/><path d="M239.2,526 L243,516 L246.8,526 Z" fill="#7375e4"/><path d="M442.5,488 A90.0,90.0 0 1 0 407.5,634" stroke="#7173e4" stroke-width="1.45"/><rect x="283.6" y="519" width="8" height="12" fill="#fff"/><path d="M283.8,536 L287.6,526 L291.40000000000003,536 Z" fill="#7173e4"/><path d="M442.5,488 A77.7,77.7 0 1 0 407.5,634" stroke="#7173e4" stroke-width="1.45"/><rect x="323" y="527" width="8" height="12" fill="#fff"/><path d="M323.2,544 L327,534 L330.8,544 Z" fill="#7173e4"/><path d="M442.5,488 A78.4,78.4 0 1 1 407.5,634" stroke="#6d6fe2" stroke-width="1.45"/><path d="M442.5,488 A91.1,91.1 0 1 1 407.5,634" stroke="#7173e4" stroke-width="1.45"/><path d="M442.5,488 A109.3,109.3 0 1 1 407.5,634" stroke="#7a7ce6" stroke-width="1.45"/><path d="M442.5,488 A132.5,132.5 0 1 1 407.5,634" stroke="#9395ea" stroke-width="1.45"/><path d="M442.5,488 A159.7,159.7 0 1 1 407.5,634" stroke="#b0b1f0" stroke-width="1.45"/><path d="M442.5,488 A192.4,192.4 0 1 1 407.5,634" stroke="#d3d4f5" stroke-width="1.45"/><rect x="521" y="586" width="10" height="12" fill="#fff"/><path d="M522,590 L526,580 L530,590 Z" fill="#6466e0"/><path d="M509,366 L340,755" stroke="#6d6fe2" stroke-width="1.8"/><path d="M471,366 L382,757" stroke="#7375e2" stroke-width="1.6" stroke-dasharray="6 5"/><path d="M494,384 C 482,382 476,390 484,398 C 492,405 510,406 515,400 C 518,396 516,392 512,389" stroke="#6d6fe2" stroke-width="1.7"/><path d="M508,384 L516,386 L514,395 Z" fill="#6d6fe2"/><path d="M457,422 C 466,422 476,425 481,431" stroke="#6d6fe2" stroke-width="2.6"/><path d="M345,721 C 333,719 327,727 335,735 C 343,742 361,743 366,737 C 369,733 367,729 363,726" stroke="#6d6fe2" stroke-width="1.7"/><path d="M359,721 L367,723 L365,732 Z" fill="#6d6fe2"/><circle cx="425.5" cy="561" r="74.3" fill="#f2f2fc" stroke="#6a6ce2" stroke-width="1.8"/><path d="M436,515 L418.5,559 L434,563 Z" fill="#b5b6f6"/><path d="M418,563 L433.5,567 L415,611 Z" fill="#6466ee"/></svg><div class="t" style="left:365px;top:320.86px;font-size:14.5px;color:#8a8ce8;font-weight:700;font-family:'Liberation Serif', serif;">North</div><div class="t" style="left:367px;top:340.86px;font-size:14.5px;color:#8a8ce8;font-weight:700;font-family:'Liberation Serif', serif;">Magnetic Pole</div><div class="t" style="left:540px;top:364.90px;font-size:14.3px;color:#7173d8;font-weight:700;">Geographic</div><div class="t" style="left:540px;top:383.90px;font-size:14.3px;color:#7173d8;font-weight:700;">North Pole</div><div class="t" style="left:464px;top:402.15px;font-size:14px;color:#7173d8;font-weight:700;">1.5</div><div class="t" style="left:240px;top:727.90px;font-size:14.3px;color:#7173d8;font-weight:700;">Geographic</div><div class="t" style="left:240px;top:745.90px;font-size:14.3px;color:#7173d8;font-weight:700;">South Pole</div><div class="t" style="left:401px;top:737.90px;font-size:14.3px;color:#7173d8;font-weight:700;">South</div><div class="t" style="left:401px;top:756.90px;font-size:14.3px;color:#7173d8;font-weight:700;">Magnetic</div><div class="t" style="left:401px;top:774.90px;font-size:14.3px;color:#7173d8;font-weight:700;">Pole</div><div class="r" style="left:841px;top:99px;width:228px;height:42px;border-radius:5px;background:linear-gradient(90deg,#8587f6 0%,#b3b4f9 55%,#d3d3fb 100%)"></div><div class="t" style="left:856px;top:109.85px;font-size:23.8px;color:#fff;font-weight:700;">Earth&#x27;s Magnetic</div><div class="t" style="left:841px;top:163.09px;font-size:18.8px;color:#5a5ce6;">The Earth&#x27;s Magnetic Field Is Like A Huge And Invisible Protective Shield,</div><div class="t" style="left:841px;top:203.39px;font-size:18.8px;color:#5a5ce6;">Playing A Vital Role In The Cosmic Environment. It Effectively Resists Most</div><div class="t" style="left:841px;top:243.69px;font-size:18.8px;color:#5a5ce6;">Of The Various Types Of Rays in The Universe, Such As High-Energy</div><div class="t" style="left:841px;top:283.99px;font-size:18.8px;color:#5a5ce6;">Charged Particle Flows.</div><svg class="r" style="left:0;top:0" width="1660" height="560" fill="none"><circle cx="857" cy="408" r="17" fill="#f3f3fd" stroke="#c9cbf3" stroke-width="1.1700000000000002"/><path d="M857,470 V501" stroke="#c9cbf3" stroke-width="2"/><circle cx="936" cy="408" r="24" fill="#e4e4fb" stroke="#a9abf0" stroke-width="1.56"/><path d="M936,470 V501" stroke="#a9abf0" stroke-width="2"/><circle cx="1029" cy="408" r="31" fill="#c9caf8" stroke="#7a7ce8" stroke-width="1.8199999999999998"/><path d="M1029,470 V501" stroke="#7a7ce8" stroke-width="2"/><circle cx="1142" cy="408" r="38" fill="#b9baf7" stroke="#5a5ce6" stroke-width="2.3400000000000003"/><path d="M1142,470 V501" stroke="#5a5ce6" stroke-width="2"/><circle cx="1254" cy="408" r="31" fill="#c9caf8" stroke="#7a7ce8" stroke-width="1.8199999999999998"/><path d="M1254,470 V501" stroke="#7a7ce8" stroke-width="2"/><circle cx="1352" cy="408" r="24" fill="#e4e4fb" stroke="#a9abf0" stroke-width="1.56"/><path d="M1352,470 V501" stroke="#a9abf0" stroke-width="2"/><circle cx="1455" cy="408" r="17" fill="#f3f3fd" stroke="#c9cbf3" stroke-width="1.1700000000000002"/><path d="M1455,470 V501" stroke="#c9cbf3" stroke-width="2"/><ellipse cx="1142" cy="408" rx="54" ry="17" transform="rotate(28 1142 408)" stroke="#5a5ce6" stroke-width="2.2"/><circle cx="1142" cy="408" r="37" fill="#b9baf7" fill-opacity="0.0"/><path d="M1105,408 A37,37 0 0 1 1179,408" fill="#b9baf7" stroke="#5a5ce6" stroke-width="2.3" /></svg><div class="t" style="left:857px;top:510.73px;font-size:14.5px;color:#c9cbf3;font-weight:700;transform:translateX(-50%);">Venus</div><div class="t" style="left:936px;top:510.73px;font-size:14.5px;color:#9a9cec;font-weight:700;transform:translateX(-50%);">Mars</div><div class="t" style="left:1029px;top:510.73px;font-size:14.5px;color:#7a7ce0;font-weight:700;transform:translateX(-50%);">Jupiter</div><div class="t" style="left:1142px;top:510.73px;font-size:14.5px;color:#5052d8;font-weight:700;transform:translateX(-50%);">Saturn</div><div class="t" style="left:1254px;top:510.73px;font-size:14.5px;color:#7a7ce0;font-weight:700;transform:translateX(-50%);">Uranus</div><div class="t" style="left:1352px;top:510.73px;font-size:14.5px;color:#9a9cec;font-weight:700;transform:translateX(-50%);">Neptune</div><div class="t" style="left:1455px;top:510.73px;font-size:14.5px;color:#c9cbf3;font-weight:700;transform:translateX(-50%);">Mercury</div><div class="r" style="left:841px;top:603px;width:277px;height:42px;border-radius:5px;background:linear-gradient(90deg,#8587f6 0%,#b3b4f9 55%,#d3d3fb 100%)"></div><div class="t" style="left:1102px;top:613.85px;font-size:23.8px;color:#fff;font-weight:700;transform:translateX(-100%);">The Magnetic Field</div><div class="t" style="left:1436px;top:669.09px;font-size:18.8px;color:#5a5ce6;transform:translateX(-100%);">If These Rays Reach The Earth Without Obstruction, They Will Cause A</div><div class="t" style="left:1430.7px;top:709.09px;font-size:18.8px;color:#5a5ce6;transform:translateX(-100%);">Devastating Blow To Life On Earth. Once The Earth Loses Its Magnetic</div><div class="t" style="left:1465.6px;top:749.09px;font-size:18.8px;color:#5a5ce6;transform:translateX(-100%);">Field, All Creatures On The Earth&#x27;s Surface, Whether Complex Plants And</div><div class="t" style="left:1461.6px;top:789.09px;font-size:18.8px;color:#5a5ce6;transform:translateX(-100%);">Animals And Tiny Microorganisms, Will Find It Difficult To Survive Under The</div><div class="t" style="left:842px;top:829.09px;font-size:18.8px;color:#5a5ce6;">Radiation Of Strong Rays And Will Quickly Go To Extinction.</div><div class="r" style="left:536px;top:587px;width:441px;height:224px;background:#fff;border:2.8px solid #000"></div><div class="r" style="left:690px;top:633px;width:132px;height:132px;background:#c9c9d1;border-radius:22px;"></div><svg class="r" style="left:690px;top:633px" width="132" height="132" fill="none"><defs><linearGradient id="sg1" x1="0" y1="0" x2="0.6" y2="1"><stop offset="0" stop-color="#c6eefc"/><stop offset="1" stop-color="#d8d6fb"/></linearGradient></defs><path d="M52,38 C40,52 33,70 36,88 C40,104 60,108 72,100" stroke="url(#sg1)" stroke-width="23" stroke-linecap="round"/><path d="M97,47 C104,62 104,80 96,93" stroke="#d9d5fa" stroke-width="21" stroke-linecap="round"/></svg><div class="t" style="left:540px;top:675.13px;font-size:79px;color:#000;">John</div><div class="t" style="left:762px;top:641.74px;font-size:26.3px;color:#000;">Assinado digital</div><div class="t" style="left:762px;top:673.74px;font-size:26.3px;color:#000;">mente por:John</div><div class="t" style="left:762px;top:705.74px;font-size:26.3px;color:#000;">Data:2025.05.27</div><div class="t" style="left:762px;top:737.74px;font-size:26.3px;color:#000;">17:30:32 +08:00</div><div class="r" style="left:110px;top:879px;width:147px;height:42px;border-radius:5px;background:linear-gradient(90deg,#8587f6 0%,#b3b4f9 55%,#d3d3fb 100%)"></div><div class="t" style="left:125px;top:890.97px;font-size:21.3px;color:#fff;font-weight:700;">Solar Wind</div><div class="t" style="left:110px;top:955.09px;font-size:18.8px;color:#5a5ce6;">At The Same Time, The Atmosphere Will Also Lose The Protection Of The Magnetic Field And Be Gradually</div><div class="t" style="left:110px;top:995.09px;font-size:18.8px;color:#5a5ce6;">Stripped Away By Forces Such As The Solar Wind, And Eventually Disappear. It Can Be Said That The</div><div class="t" style="left:110px;top:1035.09px;font-size:18.8px;color:#5a5ce6;">Earth&#x27;s Magnetic Field Provides An Indispensable Guarantee For The Reproduction Of Life On Earth And</div><div class="t" style="left:110px;top:1075.09px;font-size:18.8px;color:#5a5ce6;">The Stable Existence Of The Atmosphere By Shielding Dangerous Substances Such As Solar Particles.</div></div></div>
<div class="t" style="left:627px;top:538.68px;font-size:24px;color:#fff;">UPDF-br</div>
<div class="t" style="left:627px;top:575.92px;font-size:19px;color:#8a8a8a;">17:18:40</div>
<div class="clip" style="left:538px;top:669px;width:64px;height:46px;background:#fff"><div class="r" style="left:0;top:0;width:1658px;height:1168px;transform:scale(0.038600723763570564);transform-origin:0 0"><div class="t" style="left:103px;top:107.91px;font-size:61px;color:#5557ee;font-weight:700;font-family:'Liberation Serif', serif;">Formation Of The</div><div class="t" style="left:98px;top:195.75px;font-size:60px;color:#5557ee;font-family:'Liberation Serif', serif;font-style:italic;">Earth’s Magnetic Field</div><svg class="r" style="left:0;top:0" width="1000" height="900" fill="none"><path d="M442.5,488 A190.5,190.5 0 1 0 407.5,634" stroke="#d3d4f5" stroke-width="1.45"/><rect x="64" y="469" width="8" height="12" fill="#fff"/><path d="M64.2,486 L68,476 L71.8,486 Z" fill="#d3d4f5"/><path d="M442.5,488 A158.0,158.0 0 1 0 407.5,634" stroke="#b0b1f0" stroke-width="1.45"/><rect x="130" y="486" width="8" height="12" fill="#fff"/><path d="M130.2,503 L134,493 L137.8,503 Z" fill="#b0b1f0"/><path d="M442.5,488 A130.9,130.9 0 1 0 407.5,634" stroke="#9193eb" stroke-width="1.45"/><rect x="188" y="498" width="8" height="12" fill="#fff"/><path d="M188.2,515 L192,505 L195.8,515 Z" fill="#9193eb"/><path d="M442.5,488 A108.2,108.2 0 1 0 407.5,634" stroke="#7375e4" stroke-width="1.45"/><rect x="239" y="509" width="8" height="12" fill="#fff"/><path d="M239.2,526 L243,516 L246.8,526 Z" fill="#7375e4"/><path d="M442.5,488 A90.0,90.0 0 1 0 407.5,634" stroke="#7173e4" stroke-width="1.45"/><rect x="283.6" y="519" width="8" height="12" fill="#fff"/><path d="M283.8,536 L287.6,526 L291.40000000000003,536 Z" fill="#7173e4"/><path d="M442.5,488 A77.7,77.7 0 1 0 407.5,634" stroke="#7173e4" stroke-width="1.45"/><rect x="323" y="527" width="8" height="12" fill="#fff"/><path d="M323.2,544 L327,534 L330.8,544 Z" fill="#7173e4"/><path d="M442.5,488 A78.4,78.4 0 1 1 407.5,634" stroke="#6d6fe2" stroke-width="1.45"/><path d="M442.5,488 A91.1,91.1 0 1 1 407.5,634" stroke="#7173e4" stroke-width="1.45"/><path d="M442.5,488 A109.3,109.3 0 1 1 407.5,634" stroke="#7a7ce6" stroke-width="1.45"/><path d="M442.5,488 A132.5,132.5 0 1 1 407.5,634" stroke="#9395ea" stroke-width="1.45"/><path d="M442.5,488 A159.7,159.7 0 1 1 407.5,634" stroke="#b0b1f0" stroke-width="1.45"/><path d="M442.5,488 A192.4,192.4 0 1 1 407.5,634" stroke="#d3d4f5" stroke-width="1.45"/><rect x="521" y="586" width="10" height="12" fill="#fff"/><path d="M522,590 L526,580 L530,590 Z" fill="#6466e0"/><path d="M509,366 L340,755" stroke="#6d6fe2" stroke-width="1.8"/><path d="M471,366 L382,757" stroke="#7375e2" stroke-width="1.6" stroke-dasharray="6 5"/><path d="M494,384 C 482,382 476,390 484,398 C 492,405 510,406 515,400 C 518,396 516,392 512,389" stroke="#6d6fe2" stroke-width="1.7"/><path d="M508,384 L516,386 L514,395 Z" fill="#6d6fe2"/><path d="M457,422 C 466,422 476,425 481,431" stroke="#6d6fe2" stroke-width="2.6"/><path d="M345,721 C 333,719 327,727 335,735 C 343,742 361,743 366,737 C 369,733 367,729 363,726" stroke="#6d6fe2" stroke-width="1.7"/><path d="M359,721 L367,723 L365,732 Z" fill="#6d6fe2"/><circle cx="425.5" cy="561" r="74.3" fill="#f2f2fc" stroke="#6a6ce2" stroke-width="1.8"/><path d="M436,515 L418.5,559 L434,563 Z" fill="#b5b6f6"/><path d="M418,563 L433.5,567 L415,611 Z" fill="#6466ee"/></svg><div class="t" style="left:365px;top:320.86px;font-size:14.5px;color:#8a8ce8;font-weight:700;font-family:'Liberation Serif', serif;">North</div><div class="t" style="left:367px;top:340.86px;font-size:14.5px;color:#8a8ce8;font-weight:700;font-family:'Liberation Serif', serif;">Magnetic Pole</div><div class="t" style="left:540px;top:364.90px;font-size:14.3px;color:#7173d8;font-weight:700;">Geographic</div><div class="t" style="left:540px;top:383.90px;font-size:14.3px;color:#7173d8;font-weight:700;">North Pole</div><div class="t" style="left:464px;top:402.15px;font-size:14px;color:#7173d8;font-weight:700;">1.5</div><div class="t" style="left:240px;top:727.90px;font-size:14.3px;color:#7173d8;font-weight:700;">Geographic</div><div class="t" style="left:240px;top:745.90px;font-size:14.3px;color:#7173d8;font-weight:700;">South Pole</div><div class="t" style="left:401px;top:737.90px;font-size:14.3px;color:#7173d8;font-weight:700;">South</div><div class="t" style="left:401px;top:756.90px;font-size:14.3px;color:#7173d8;font-weight:700;">Magnetic</div><div class="t" style="left:401px;top:774.90px;font-size:14.3px;color:#7173d8;font-weight:700;">Pole</div><div class="r" style="left:841px;top:99px;width:228px;height:42px;border-radius:5px;background:linear-gradient(90deg,#8587f6 0%,#b3b4f9 55%,#d3d3fb 100%)"></div><div class="t" style="left:856px;top:109.85px;font-size:23.8px;color:#fff;font-weight:700;">Earth&#x27;s Magnetic</div><div class="t" style="left:841px;top:163.09px;font-size:18.8px;color:#5a5ce6;">The Earth&#x27;s Magnetic Field Is Like A Huge And Invisible Protective Shield,</div><div class="t" style="left:841px;top:203.39px;font-size:18.8px;color:#5a5ce6;">Playing A Vital Role In The Cosmic Environment. It Effectively Resists Most</div><div class="t" style="left:841px;top:243.69px;font-size:18.8px;color:#5a5ce6;">Of The Various Types Of Rays in The Universe, Such As High-Energy</div><div class="t" style="left:841px;top:283.99px;font-size:18.8px;color:#5a5ce6;">Charged Particle Flows.</div><svg class="r" style="left:0;top:0" width="1660" height="560" fill="none"><circle cx="857" cy="408" r="17" fill="#f3f3fd" stroke="#c9cbf3" stroke-width="1.1700000000000002"/><path d="M857,470 V501" stroke="#c9cbf3" stroke-width="2"/><circle cx="936" cy="408" r="24" fill="#e4e4fb" stroke="#a9abf0" stroke-width="1.56"/><path d="M936,470 V501" stroke="#a9abf0" stroke-width="2"/><circle cx="1029" cy="408" r="31" fill="#c9caf8" stroke="#7a7ce8" stroke-width="1.8199999999999998"/><path d="M1029,470 V501" stroke="#7a7ce8" stroke-width="2"/><circle cx="1142" cy="408" r="38" fill="#b9baf7" stroke="#5a5ce6" stroke-width="2.3400000000000003"/><path d="M1142,470 V501" stroke="#5a5ce6" stroke-width="2"/><circle cx="1254" cy="408" r="31" fill="#c9caf8" stroke="#7a7ce8" stroke-width="1.8199999999999998"/><path d="M1254,470 V501" stroke="#7a7ce8" stroke-width="2"/><circle cx="1352" cy="408" r="24" fill="#e4e4fb" stroke="#a9abf0" stroke-width="1.56"/><path d="M1352,470 V501" stroke="#a9abf0" stroke-width="2"/><circle cx="1455" cy="408" r="17" fill="#f3f3fd" stroke="#c9cbf3" stroke-width="1.1700000000000002"/><path d="M1455,470 V501" stroke="#c9cbf3" stroke-width="2"/><ellipse cx="1142" cy="408" rx="54" ry="17" transform="rotate(28 1142 408)" stroke="#5a5ce6" stroke-width="2.2"/><circle cx="1142" cy="408" r="37" fill="#b9baf7" fill-opacity="0.0"/><path d="M1105,408 A37,37 0 0 1 1179,408" fill="#b9baf7" stroke="#5a5ce6" stroke-width="2.3" /></svg><div class="t" style="left:857px;top:510.73px;font-size:14.5px;color:#c9cbf3;font-weight:700;transform:translateX(-50%);">Venus</div><div class="t" style="left:936px;top:510.73px;font-size:14.5px;color:#9a9cec;font-weight:700;transform:translateX(-50%);">Mars</div><div class="t" style="left:1029px;top:510.73px;font-size:14.5px;color:#7a7ce0;font-weight:700;transform:translateX(-50%);">Jupiter</div><div class="t" style="left:1142px;top:510.73px;font-size:14.5px;color:#5052d8;font-weight:700;transform:translateX(-50%);">Saturn</div><div class="t" style="left:1254px;top:510.73px;font-size:14.5px;color:#7a7ce0;font-weight:700;transform:translateX(-50%);">Uranus</div><div class="t" style="left:1352px;top:510.73px;font-size:14.5px;color:#9a9cec;font-weight:700;transform:translateX(-50%);">Neptune</div><div class="t" style="left:1455px;top:510.73px;font-size:14.5px;color:#c9cbf3;font-weight:700;transform:translateX(-50%);">Mercury</div><div class="r" style="left:841px;top:603px;width:277px;height:42px;border-radius:5px;background:linear-gradient(90deg,#8587f6 0%,#b3b4f9 55%,#d3d3fb 100%)"></div><div class="t" style="left:1102px;top:613.85px;font-size:23.8px;color:#fff;font-weight:700;transform:translateX(-100%);">The Magnetic Field</div><div class="t" style="left:1436px;top:669.09px;font-size:18.8px;color:#5a5ce6;transform:translateX(-100%);">If These Rays Reach The Earth Without Obstruction, They Will Cause A</div><div class="t" style="left:1430.7px;top:709.09px;font-size:18.8px;color:#5a5ce6;transform:translateX(-100%);">Devastating Blow To Life On Earth. Once The Earth Loses Its Magnetic</div><div class="t" style="left:1465.6px;top:749.09px;font-size:18.8px;color:#5a5ce6;transform:translateX(-100%);">Field, All Creatures On The Earth&#x27;s Surface, Whether Complex Plants And</div><div class="t" style="left:1461.6px;top:789.09px;font-size:18.8px;color:#5a5ce6;transform:translateX(-100%);">Animals And Tiny Microorganisms, Will Find It Difficult To Survive Under The</div><div class="t" style="left:842px;top:829.09px;font-size:18.8px;color:#5a5ce6;">Radiation Of Strong Rays And Will Quickly Go To Extinction.</div><div class="r" style="left:536px;top:587px;width:441px;height:224px;background:#fff;border:2.8px solid #000"></div><div class="r" style="left:690px;top:633px;width:132px;height:132px;background:#c9c9d1;border-radius:22px;"></div><svg class="r" style="left:690px;top:633px" width="132" height="132" fill="none"><defs><linearGradient id="sg1" x1="0" y1="0" x2="0.6" y2="1"><stop offset="0" stop-color="#c6eefc"/><stop offset="1" stop-color="#d8d6fb"/></linearGradient></defs><path d="M52,38 C40,52 33,70 36,88 C40,104 60,108 72,100" stroke="url(#sg1)" stroke-width="23" stroke-linecap="round"/><path d="M97,47 C104,62 104,80 96,93" stroke="#d9d5fa" stroke-width="21" stroke-linecap="round"/></svg><div class="t" style="left:540px;top:675.13px;font-size:79px;color:#000;">John</div><div class="t" style="left:762px;top:641.74px;font-size:26.3px;color:#000;">Assinado digital</div><div class="t" style="left:762px;top:673.74px;font-size:26.3px;color:#000;">mente por:John</div><div class="t" style="left:762px;top:705.74px;font-size:26.3px;color:#000;">Data:2025.05.27</div><div class="t" style="left:762px;top:737.74px;font-size:26.3px;color:#000;">17:30:32 +08:00</div><div class="r" style="left:110px;top:879px;width:147px;height:42px;border-radius:5px;background:linear-gradient(90deg,#8587f6 0%,#b3b4f9 55%,#d3d3fb 100%)"></div><div class="t" style="left:125px;top:890.97px;font-size:21.3px;color:#fff;font-weight:700;">Solar Wind</div><div class="t" style="left:110px;top:955.09px;font-size:18.8px;color:#5a5ce6;">At The Same Time, The Atmosphere Will Also Lose The Protection Of The Magnetic Field And Be Gradually</div><div class="t" style="left:110px;top:995.09px;font-size:18.8px;color:#5a5ce6;">Stripped Away By Forces Such As The Solar Wind, And Eventually Disappear. It Can Be Said That The</div><div class="t" style="left:110px;top:1035.09px;font-size:18.8px;color:#5a5ce6;">Earth&#x27;s Magnetic Field Provides An Indispensable Guarantee For The Reproduction Of Life On Earth And</div><div class="t" style="left:110px;top:1075.09px;font-size:18.8px;color:#5a5ce6;">The Stable Existence Of The Atmosphere By Shielding Dangerous Substances Such As Solar Particles.</div></div></div>
<div class="t" style="left:627px;top:665.68px;font-size:24px;color:#fff;">UPDF-2</div>
<div class="t" style="left:627px;top:703.92px;font-size:19px;color:#8a8a8a;">17:18:36</div>
<div class="clip" style="left:547px;top:787px;width:46px;height:64px;background:#fff"><div class="r" style="left:3px;top:6px;width:18px;height:1.2px;background:#777"></div><div class="r" style="left:24px;top:6px;width:10px;height:1.2px;background:#777"></div><div class="r" style="left:8px;top:17px;width:8px;height:1.2px;background:#777"></div><div class="r" style="left:4px;top:23px;width:14px;height:1.2px;background:#777"></div><div class="r" style="left:4px;top:26px;width:28px;height:1.2px;background:#777"></div><div class="r" style="left:4px;top:29px;width:32px;height:1.2px;background:#777"></div><div class="r" style="left:4px;top:38px;width:6px;height:1.2px;background:#777"></div><div class="r" style="left:4px;top:46px;width:10px;height:1.2px;background:#777"></div><div class="r" style="left:28px;top:44px;width:3px;height:1.2px;background:#777"></div><div class="r" style="left:30px;top:48px;width:10px;height:1.2px;background:#777"></div><div class="r" style="left:4px;top:53px;width:8px;height:1.2px;background:#777"></div></div>
<div class="t" style="left:627px;top:793.68px;font-size:24px;color:#fff;">Invoice-flo-thaisdecerqueira (1)</div>
<div class="t" style="left:627px;top:831.92px;font-size:19px;color:#8a8a8a;">10:29:41</div>
<div class="clip" style="left:547px;top:916px;width:46px;height:63px;background:linear-gradient(180deg,#f9f4f5,#efe6e8)"><div class="r" style="left:14px;top:6px;width:22px;height:9px;border-bottom:1.2px solid #333;border-radius:0 0 40% 40%"></div><div class="r" style="left:20px;top:18px;width:14px;height:1px;background:#888"></div><div class="r" style="left:0px;top:24px;width:12px;height:12px;border-radius:50%;background:radial-gradient(circle at 35% 35%,#fbe5ea,#e4b3bf)"></div><div class="r" style="left:10px;top:28px;width:12px;height:12px;border-radius:50%;background:radial-gradient(circle at 35% 35%,#fbe5ea,#e4b3bf)"></div><div class="r" style="left:-2px;top:36px;width:12px;height:12px;border-radius:50%;background:radial-gradient(circle at 35% 35%,#fbe5ea,#e4b3bf)"></div><div class="r" style="left:7px;top:40px;width:12px;height:12px;border-radius:50%;background:radial-gradient(circle at 35% 35%,#fbe5ea,#e4b3bf)"></div><div class="r" style="left:17px;top:39px;width:10px;height:10px;border-radius:50%;background:radial-gradient(circle at 35% 35%,#fbe5ea,#e4b3bf)"></div><div class="r" style="left:3px;top:49px;width:12px;height:12px;border-radius:50%;background:radial-gradient(circle at 35% 35%,#fbe5ea,#e4b3bf)"></div><div class="r" style="left:15px;top:51px;width:10px;height:10px;border-radius:50%;background:radial-gradient(circle at 35% 35%,#fbe5ea,#e4b3bf)"></div><div class="r" style="left:-4px;top:47px;width:10px;height:10px;border-radius:50%;background:radial-gradient(circle at 35% 35%,#fbe5ea,#e4b3bf)"></div></div>
<div class="t" style="left:627px;top:921.35px;font-size:24.4px;color:#fff;">birthday-card-for-boss-03</div>
<div class="t" style="left:627px;top:960.92px;font-size:19px;color:#8a8a8a;">09/17</div>
<div class="clip" style="left:538px;top:1053px;width:64px;height:46px;background:#fff"><div class="r" style="left:0;top:0;width:1658px;height:1168px;transform:scale(0.038600723763570564);transform-origin:0 0"><div class="t" style="left:103px;top:107.91px;font-size:61px;color:#5557ee;font-weight:700;font-family:'Liberation Serif', serif;">Formation Of The</div><div class="t" style="left:98px;top:195.75px;font-size:60px;color:#5557ee;font-family:'Liberation Serif', serif;font-style:italic;">Earth’s Magnetic Field</div><svg class="r" style="left:0;top:0" width="1000" height="900" fill="none"><path d="M442.5,488 A190.5,190.5 0 1 0 407.5,634" stroke="#d3d4f5" stroke-width="1.45"/><rect x="64" y="469" width="8" height="12" fill="#fff"/><path d="M64.2,486 L68,476 L71.8,486 Z" fill="#d3d4f5"/><path d="M442.5,488 A158.0,158.0 0 1 0 407.5,634" stroke="#b0b1f0" stroke-width="1.45"/><rect x="130" y="486" width="8" height="12" fill="#fff"/><path d="M130.2,503 L134,493 L137.8,503 Z" fill="#b0b1f0"/><path d="M442.5,488 A130.9,130.9 0 1 0 407.5,634" stroke="#9193eb" stroke-width="1.45"/><rect x="188" y="498" width="8" height="12" fill="#fff"/><path d="M188.2,515 L192,505 L195.8,515 Z" fill="#9193eb"/><path d="M442.5,488 A108.2,108.2 0 1 0 407.5,634" stroke="#7375e4" stroke-width="1.45"/><rect x="239" y="509" width="8" height="12" fill="#fff"/><path d="M239.2,526 L243,516 L246.8,526 Z" fill="#7375e4"/><path d="M442.5,488 A90.0,90.0 0 1 0 407.5,634" stroke="#7173e4" stroke-width="1.45"/><rect x="283.6" y="519" width="8" height="12" fill="#fff"/><path d="M283.8,536 L287.6,526 L291.40000000000003,536 Z" fill="#7173e4"/><path d="M442.5,488 A77.7,77.7 0 1 0 407.5,634" stroke="#7173e4" stroke-width="1.45"/><rect x="323" y="527" width="8" height="12" fill="#fff"/><path d="M323.2,544 L327,534 L330.8,544 Z" fill="#7173e4"/><path d="M442.5,488 A78.4,78.4 0 1 1 407.5,634" stroke="#6d6fe2" stroke-width="1.45"/><path d="M442.5,488 A91.1,91.1 0 1 1 407.5,634" stroke="#7173e4" stroke-width="1.45"/><path d="M442.5,488 A109.3,109.3 0 1 1 407.5,634" stroke="#7a7ce6" stroke-width="1.45"/><path d="M442.5,488 A132.5,132.5 0 1 1 407.5,634" stroke="#9395ea" stroke-width="1.45"/><path d="M442.5,488 A159.7,159.7 0 1 1 407.5,634" stroke="#b0b1f0" stroke-width="1.45"/><path d="M442.5,488 A192.4,192.4 0 1 1 407.5,634" stroke="#d3d4f5" stroke-width="1.45"/><rect x="521" y="586" width="10" height="12" fill="#fff"/><path d="M522,590 L526,580 L530,590 Z" fill="#6466e0"/><path d="M509,366 L340,755" stroke="#6d6fe2" stroke-width="1.8"/><path d="M471,366 L382,757" stroke="#7375e2" stroke-width="1.6" stroke-dasharray="6 5"/><path d="M494,384 C 482,382 476,390 484,398 C 492,405 510,406 515,400 C 518,396 516,392 512,389" stroke="#6d6fe2" stroke-width="1.7"/><path d="M508,384 L516,386 L514,395 Z" fill="#6d6fe2"/><path d="M457,422 C 466,422 476,425 481,431" stroke="#6d6fe2" stroke-width="2.6"/><path d="M345,721 C 333,719 327,727 335,735 C 343,742 361,743 366,737 C 369,733 367,729 363,726" stroke="#6d6fe2" stroke-width="1.7"/><path d="M359,721 L367,723 L365,732 Z" fill="#6d6fe2"/><circle cx="425.5" cy="561" r="74.3" fill="#f2f2fc" stroke="#6a6ce2" stroke-width="1.8"/><path d="M436,515 L418.5,559 L434,563 Z" fill="#b5b6f6"/><path d="M418,563 L433.5,567 L415,611 Z" fill="#6466ee"/></svg><div class="t" style="left:365px;top:320.86px;font-size:14.5px;color:#8a8ce8;font-weight:700;font-family:'Liberation Serif', serif;">North</div><div class="t" style="left:367px;top:340.86px;font-size:14.5px;color:#8a8ce8;font-weight:700;font-family:'Liberation Serif', serif;">Magnetic Pole</div><div class="t" style="left:540px;top:364.90px;font-size:14.3px;color:#7173d8;font-weight:700;">Geographic</div><div class="t" style="left:540px;top:383.90px;font-size:14.3px;color:#7173d8;font-weight:700;">North Pole</div><div class="t" style="left:464px;top:402.15px;font-size:14px;color:#7173d8;font-weight:700;">1.5</div><div class="t" style="left:240px;top:727.90px;font-size:14.3px;color:#7173d8;font-weight:700;">Geographic</div><div class="t" style="left:240px;top:745.90px;font-size:14.3px;color:#7173d8;font-weight:700;">South Pole</div><div class="t" style="left:401px;top:737.90px;font-size:14.3px;color:#7173d8;font-weight:700;">South</div><div class="t" style="left:401px;top:756.90px;font-size:14.3px;color:#7173d8;font-weight:700;">Magnetic</div><div class="t" style="left:401px;top:774.90px;font-size:14.3px;color:#7173d8;font-weight:700;">Pole</div><div class="r" style="left:841px;top:99px;width:228px;height:42px;border-radius:5px;background:linear-gradient(90deg,#8587f6 0%,#b3b4f9 55%,#d3d3fb 100%)"></div><div class="t" style="left:856px;top:109.85px;font-size:23.8px;color:#fff;font-weight:700;">Earth&#x27;s Magnetic</div><div class="t" style="left:841px;top:163.09px;font-size:18.8px;color:#5a5ce6;">The Earth&#x27;s Magnetic Field Is Like A Huge And Invisible Protective Shield,</div><div class="t" style="left:841px;top:203.39px;font-size:18.8px;color:#5a5ce6;">Playing A Vital Role In The Cosmic Environment. It Effectively Resists Most</div><div class="t" style="left:841px;top:243.69px;font-size:18.8px;color:#5a5ce6;">Of The Various Types Of Rays in The Universe, Such As High-Energy</div><div class="t" style="left:841px;top:283.99px;font-size:18.8px;color:#5a5ce6;">Charged Particle Flows.</div><svg class="r" style="left:0;top:0" width="1660" height="560" fill="none"><circle cx="857" cy="408" r="17" fill="#f3f3fd" stroke="#c9cbf3" stroke-width="1.1700000000000002"/><path d="M857,470 V501" stroke="#c9cbf3" stroke-width="2"/><circle cx="936" cy="408" r="24" fill="#e4e4fb" stroke="#a9abf0" stroke-width="1.56"/><path d="M936,470 V501" stroke="#a9abf0" stroke-width="2"/><circle cx="1029" cy="408" r="31" fill="#c9caf8" stroke="#7a7ce8" stroke-width="1.8199999999999998"/><path d="M1029,470 V501" stroke="#7a7ce8" stroke-width="2"/><circle cx="1142" cy="408" r="38" fill="#b9baf7" stroke="#5a5ce6" stroke-width="2.3400000000000003"/><path d="M1142,470 V501" stroke="#5a5ce6" stroke-width="2"/><circle cx="1254" cy="408" r="31" fill="#c9caf8" stroke="#7a7ce8" stroke-width="1.8199999999999998"/><path d="M1254,470 V501" stroke="#7a7ce8" stroke-width="2"/><circle cx="1352" cy="408" r="24" fill="#e4e4fb" stroke="#a9abf0" stroke-width="1.56"/><path d="M1352,470 V501" stroke="#a9abf0" stroke-width="2"/><circle cx="1455" cy="408" r="17" fill="#f3f3fd" stroke="#c9cbf3" stroke-width="1.1700000000000002"/><path d="M1455,470 V501" stroke="#c9cbf3" stroke-width="2"/><ellipse cx="1142" cy="408" rx="54" ry="17" transform="rotate(28 1142 408)" stroke="#5a5ce6" stroke-width="2.2"/><circle cx="1142" cy="408" r="37" fill="#b9baf7" fill-opacity="0.0"/><path d="M1105,408 A37,37 0 0 1 1179,408" fill="#b9baf7" stroke="#5a5ce6" stroke-width="2.3" /></svg><div class="t" style="left:857px;top:510.73px;font-size:14.5px;color:#c9cbf3;font-weight:700;transform:translateX(-50%);">Venus</div><div class="t" style="left:936px;top:510.73px;font-size:14.5px;color:#9a9cec;font-weight:700;transform:translateX(-50%);">Mars</div><div class="t" style="left:1029px;top:510.73px;font-size:14.5px;color:#7a7ce0;font-weight:700;transform:translateX(-50%);">Jupiter</div><div class="t" style="left:1142px;top:510.73px;font-size:14.5px;color:#5052d8;font-weight:700;transform:translateX(-50%);">Saturn</div><div class="t" style="left:1254px;top:510.73px;font-size:14.5px;color:#7a7ce0;font-weight:700;transform:translateX(-50%);">Uranus</div><div class="t" style="left:1352px;top:510.73px;font-size:14.5px;color:#9a9cec;font-weight:700;transform:translateX(-50%);">Neptune</div><div class="t" style="left:1455px;top:510.73px;font-size:14.5px;color:#c9cbf3;font-weight:700;transform:translateX(-50%);">Mercury</div><div class="r" style="left:841px;top:603px;width:277px;height:42px;border-radius:5px;background:linear-gradient(90deg,#8587f6 0%,#b3b4f9 55%,#d3d3fb 100%)"></div><div class="t" style="left:1102px;top:613.85px;font-size:23.8px;color:#fff;font-weight:700;transform:translateX(-100%);">The Magnetic Field</div><div class="t" style="left:1436px;top:669.09px;font-size:18.8px;color:#5a5ce6;transform:translateX(-100%);">If These Rays Reach The Earth Without Obstruction, They Will Cause A</div><div class="t" style="left:1430.7px;top:709.09px;font-size:18.8px;color:#5a5ce6;transform:translateX(-100%);">Devastating Blow To Life On Earth. Once The Earth Loses Its Magnetic</div><div class="t" style="left:1465.6px;top:749.09px;font-size:18.8px;color:#5a5ce6;transform:translateX(-100%);">Field, All Creatures On The Earth&#x27;s Surface, Whether Complex Plants And</div><div class="t" style="left:1461.6px;top:789.09px;font-size:18.8px;color:#5a5ce6;transform:translateX(-100%);">Animals And Tiny Microorganisms, Will Find It Difficult To Survive Under The</div><div class="t" style="left:842px;top:829.09px;font-size:18.8px;color:#5a5ce6;">Radiation Of Strong Rays And Will Quickly Go To Extinction.</div><div class="r" style="left:536px;top:587px;width:441px;height:224px;background:#fff;border:2.8px solid #000"></div><div class="r" style="left:690px;top:633px;width:132px;height:132px;background:#c9c9d1;border-radius:22px;"></div><svg class="r" style="left:690px;top:633px" width="132" height="132" fill="none"><defs><linearGradient id="sg1" x1="0" y1="0" x2="0.6" y2="1"><stop offset="0" stop-color="#c6eefc"/><stop offset="1" stop-color="#d8d6fb"/></linearGradient></defs><path d="M52,38 C40,52 33,70 36,88 C40,104 60,108 72,100" stroke="url(#sg1)" stroke-width="23" stroke-linecap="round"/><path d="M97,47 C104,62 104,80 96,93" stroke="#d9d5fa" stroke-width="21" stroke-linecap="round"/></svg><div class="t" style="left:540px;top:675.13px;font-size:79px;color:#000;">John</div><div class="t" style="left:762px;top:641.74px;font-size:26.3px;color:#000;">Assinado digital</div><div class="t" style="left:762px;top:673.74px;font-size:26.3px;color:#000;">mente por:John</div><div class="t" style="left:762px;top:705.74px;font-size:26.3px;color:#000;">Data:2025.05.27</div><div class="t" style="left:762px;top:737.74px;font-size:26.3px;color:#000;">17:30:32 +08:00</div><div class="r" style="left:110px;top:879px;width:147px;height:42px;border-radius:5px;background:linear-gradient(90deg,#8587f6 0%,#b3b4f9 55%,#d3d3fb 100%)"></div><div class="t" style="left:125px;top:890.97px;font-size:21.3px;color:#fff;font-weight:700;">Solar Wind</div><div class="t" style="left:110px;top:955.09px;font-size:18.8px;color:#5a5ce6;">At The Same Time, The Atmosphere Will Also Lose The Protection Of The Magnetic Field And Be Gradually</div><div class="t" style="left:110px;top:995.09px;font-size:18.8px;color:#5a5ce6;">Stripped Away By Forces Such As The Solar Wind, And Eventually Disappear. It Can Be Said That The</div><div class="t" style="left:110px;top:1035.09px;font-size:18.8px;color:#5a5ce6;">Earth&#x27;s Magnetic Field Provides An Indispensable Guarantee For The Reproduction Of Life On Earth And</div><div class="t" style="left:110px;top:1075.09px;font-size:18.8px;color:#5a5ce6;">The Stable Existence Of The Atmosphere By Shielding Dangerous Substances Such As Solar Particles.</div></div></div>
<div class="t" style="left:627px;top:1049.68px;font-size:24px;color:#fff;">UPDF-2</div>
<div class="t" style="left:627px;top:1087.92px;font-size:19px;color:#8a8a8a;">09/05</div>
<div class="t" style="left:524px;top:1165.28px;font-size:23.3px;color:#7b7ef5;">Navegue por mais arquivos recentes</div>
<svg class="r" style="left:940px;top:20px;" width="160" height="100" viewBox="940 20 160 100" fill="none"><path d="M961.6,29.8 L1054.9,71.2 L1061,64.5 Q1063,62 1065,65 L1089.5,100 Q1091,105 1086,105.5 L1044,103.5 Q1039,102 1041.5,98.5 L1043.1,91.8 L959.2,34.5 Q957.5,32 961.6,29.8 Z" fill="#ef4a45" stroke="#ef4a45" stroke-width="1.5" stroke-linejoin="round"/></svg>
</body></html>
